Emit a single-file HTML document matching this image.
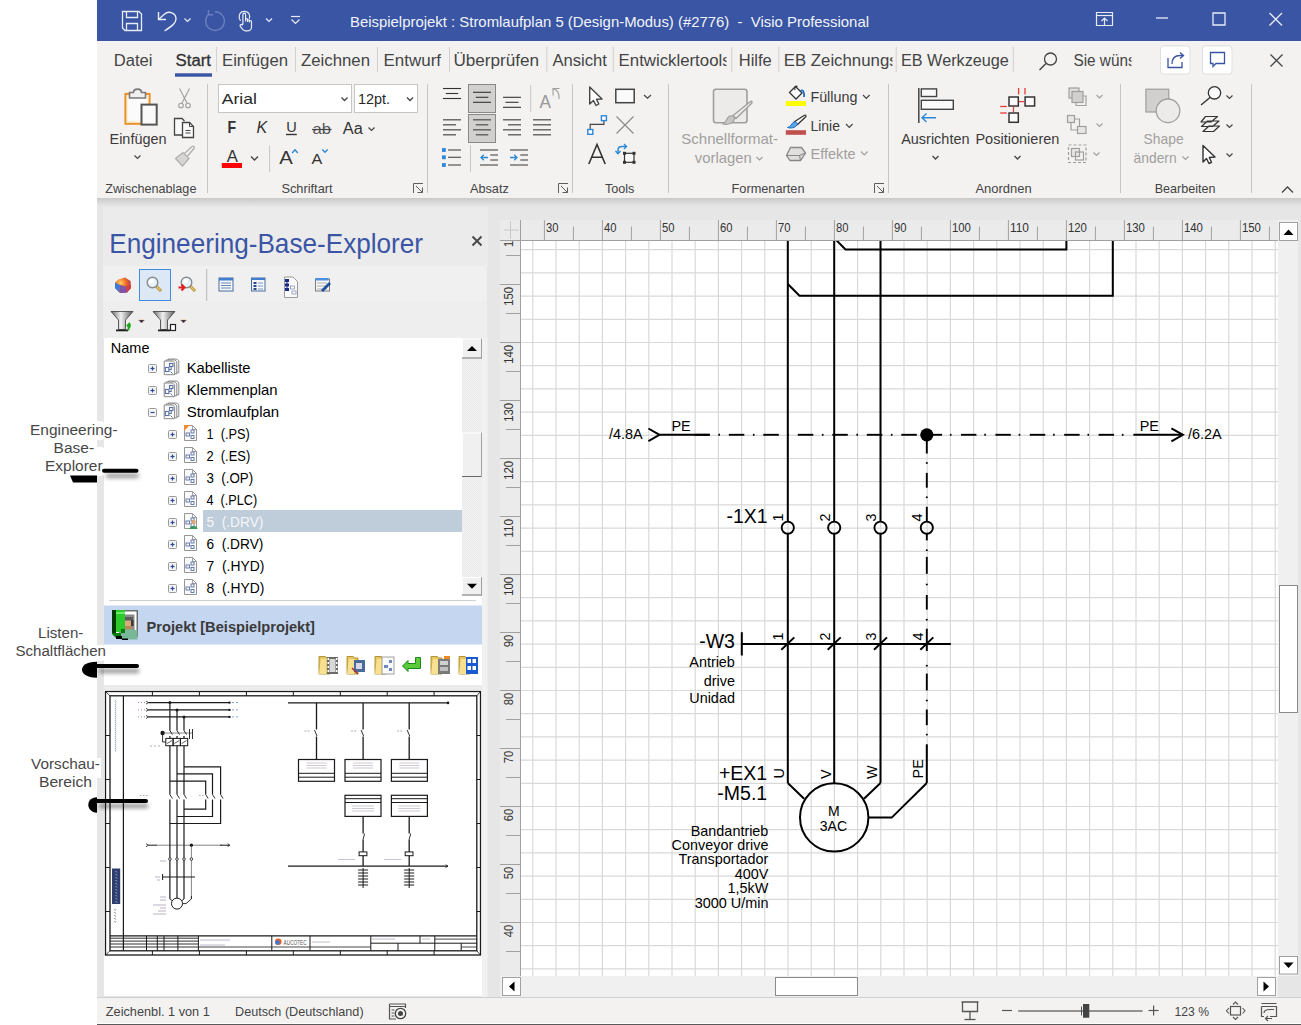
<!DOCTYPE html>
<html><head><meta charset="utf-8"><title>Visio</title>
<style>html,body{margin:0;padding:0;background:#fff;} svg{display:block} text{font-family:"Liberation Sans", sans-serif;}</style>
</head><body>
<svg width="1301" height="1025" viewBox="0 0 1301 1025">
<rect x="0" y="0" width="1301" height="1025" fill="#ffffff" />
<rect x="97" y="0" width="1204" height="41" fill="#3955A3" />
<rect x="97" y="41" width="1204" height="157" fill="#F3F2F1" />
<rect x="97" y="198" width="1204" height="799" fill="#E6E6E6" />
<defs><linearGradient id="sh" x1="0" y1="0" x2="0" y2="1"><stop offset="0" stop-color="#C9C9C9"/><stop offset="1" stop-color="#E6E6E6"/></linearGradient></defs>
<rect x="97" y="198" width="1204" height="8" fill="url(#sh)" />
<rect x="97" y="997" width="1204" height="26" fill="#F3F2F1" />
<line x1="97" y1="997.5" x2="1301" y2="997.5" stroke="#D2D0CE" stroke-width="1" />
<rect x="97" y="1024" width="1204" height="1" fill="#5A5A5A" />
<path d="M122.5 11.5 H139 L141.5 14 V30.5 H125 L122.5 28 Z" stroke="#E8ECF6" stroke-width="1.3" fill="none" />
<path d="M126.5 11.5 V17.5 H137.5 V11.5" stroke="#E8ECF6" stroke-width="1.3" fill="none" />
<path d="M126.5 30.5 V23.5 H137.5 V30.5" stroke="#E8ECF6" stroke-width="1.3" fill="none" />
<path d="M158.5 12 V19.5 H166" stroke="#E8ECF6" stroke-width="1.4" fill="none" />
<path d="M158.8 19.3 L164 14.5 C 169 10 176 13 176 19 C 176 23 172 26 164.5 31" stroke="#E8ECF6" stroke-width="1.4" fill="none" />
<path d="M184.5 18.5 L187.5 21.5 L190.5 18.5" stroke="#E8ECF6" stroke-width="1.2" fill="none" />
<path d="M208.5 14.5 A 9.3 9.3 0 1 0 215 11.8" stroke="#6B80BF" stroke-width="1.4" fill="none" />
<path d="M208.5 10 V14.8 H213.3" stroke="#6B80BF" stroke-width="1.4" fill="none" />
<path d="M240.5 20.8 C 238 17.5 239 11.5 244.2 11.3 C 249 11.2 250.5 15.5 249.3 18.8" stroke="#E8ECF6" stroke-width="1.2" fill="none" />
<path d="M242.9 24.5 V14.5 C 242.9 12.6 245.6 12.6 245.6 14.5 V21 V19.5 C 245.6 18.3 247.5 18.3 247.5 19.5 V21.5 V20.5 C 247.5 19.5 249.3 19.5 249.3 20.5 V22 V21.5 C 249.3 20.3 251.5 20.3 251.5 21.5 V27.5 C 251.5 29.5 249.5 30.8 247.5 30.8 H245.8 C 244.5 30.8 243.5 30.2 242.6 29.3 L240.2 26.2 C 239.6 25.2 240.8 24 242 24.6 L242.9 25.3" stroke="#E8ECF6" stroke-width="1.2" fill="#3955A3" stroke-linejoin="round"/>
<path d="M266 18.5 L269 21.5 L272 18.5" stroke="#E8ECF6" stroke-width="1.2" fill="none" />
<line x1="291" y1="16.5" x2="300" y2="16.5" stroke="#E8ECF6" stroke-width="1.2" />
<path d="M291.5 19.5 L295.5 23.5 L299.5 19.5" stroke="#E8ECF6" stroke-width="1.2" fill="none" />
<text x="350" y="26.5" font-size="15" fill="#F2F4FA" font-weight="normal" text-anchor="start" textLength="519" lengthAdjust="spacingAndGlyphs" xml:space="preserve">Beispielprojekt : Stromlaufplan 5 (Design-Modus) (#2776)  -  Visio Professional</text>
<path d="M1096.5 12.5 H1112.5 V25.5 H1096.5 Z" stroke="#E8ECF6" stroke-width="1.2" fill="none" />
<line x1="1096.5" y1="15.5" x2="1112.5" y2="15.5" stroke="#E8ECF6" stroke-width="1.2" />
<path d="M1101.5 21 L1104.5 18 L1107.5 21 M1104.5 18 V25" stroke="#E8ECF6" stroke-width="1.2" fill="none" />
<line x1="1156" y1="18" x2="1168" y2="18" stroke="#E8ECF6" stroke-width="1.3" />
<path d="M1213 13 H1225 V25 H1213 Z" stroke="#E8ECF6" stroke-width="1.3" fill="none" rx="1"/>
<path d="M1269.5 13 L1282 25.5 M1282 13 L1269.5 25.5" stroke="#E8ECF6" stroke-width="1.3" fill="none" />
<text x="113.8" y="66" font-size="16" fill="#444444" font-weight="normal" text-anchor="start" textLength="38.7" lengthAdjust="spacingAndGlyphs" >Datei</text>
<text x="175.6" y="66" font-size="16" fill="#333333" font-weight="normal" text-anchor="start" textLength="35.4" lengthAdjust="spacingAndGlyphs" stroke="#333333" stroke-width="0.3">Start</text>
<text x="222" y="66" font-size="16" fill="#444444" font-weight="normal" text-anchor="start" textLength="66" lengthAdjust="spacingAndGlyphs" >Einfügen</text>
<text x="301" y="66" font-size="16" fill="#444444" font-weight="normal" text-anchor="start" textLength="69" lengthAdjust="spacingAndGlyphs" >Zeichnen</text>
<text x="383.5" y="66" font-size="16" fill="#444444" font-weight="normal" text-anchor="start" textLength="57.5" lengthAdjust="spacingAndGlyphs" >Entwurf</text>
<text x="453.4" y="66" font-size="16" fill="#444444" font-weight="normal" text-anchor="start" textLength="85.6" lengthAdjust="spacingAndGlyphs" >Überprüfen</text>
<text x="552.4" y="66" font-size="16" fill="#444444" font-weight="normal" text-anchor="start" textLength="54.5" lengthAdjust="spacingAndGlyphs" >Ansicht</text>
<clipPath id="c1"><rect x="610" y="40" width="116.5" height="40"/></clipPath>
<g clip-path="url(#c1)">
<text x="618.6" y="66" font-size="16" fill="#444444" font-weight="normal" text-anchor="start" textLength="112" lengthAdjust="spacingAndGlyphs" >Entwicklertools</text>
</g>
<text x="738.8" y="66" font-size="16" fill="#444444" font-weight="normal" text-anchor="start" textLength="33" lengthAdjust="spacingAndGlyphs" >Hilfe</text>
<clipPath id="c2"><rect x="780" y="40" width="112.5" height="40"/></clipPath>
<g clip-path="url(#c2)">
<text x="783.7" y="66" font-size="16" fill="#444444" font-weight="normal" text-anchor="start" textLength="156" lengthAdjust="spacingAndGlyphs" >EB Zeichnungseditor</text>
</g>
<text x="901" y="66" font-size="16" fill="#444444" font-weight="normal" text-anchor="start" textLength="107.8" lengthAdjust="spacingAndGlyphs" >EB Werkzeuge</text>
<line x1="216.6" y1="47" x2="216.6" y2="72" stroke="#D2D0CE" stroke-width="1" />
<line x1="295.5" y1="47" x2="295.5" y2="72" stroke="#D2D0CE" stroke-width="1" />
<line x1="377.5" y1="47" x2="377.5" y2="72" stroke="#D2D0CE" stroke-width="1" />
<line x1="449.5" y1="47" x2="449.5" y2="72" stroke="#D2D0CE" stroke-width="1" />
<line x1="546.8" y1="47" x2="546.8" y2="72" stroke="#D2D0CE" stroke-width="1" />
<line x1="613.3" y1="47" x2="613.3" y2="72" stroke="#D2D0CE" stroke-width="1" />
<line x1="731.7" y1="47" x2="731.7" y2="72" stroke="#D2D0CE" stroke-width="1" />
<line x1="778.8" y1="47" x2="778.8" y2="72" stroke="#D2D0CE" stroke-width="1" />
<line x1="896.2" y1="47" x2="896.2" y2="72" stroke="#D2D0CE" stroke-width="1" />
<line x1="1013.3" y1="47" x2="1013.3" y2="72" stroke="#D2D0CE" stroke-width="1" />
<rect x="175" y="73.3" width="37" height="3.4" fill="#3955A3" />
<circle cx="1050.5" cy="59" r="6" stroke="#444" stroke-width="1.3" fill="none"/>
<line x1="1046" y1="63.5" x2="1039.5" y2="70" stroke="#444" stroke-width="1.4" />
<clipPath id="c3"><rect x="1070" y="40" width="61.5" height="40"/></clipPath>
<g clip-path="url(#c3)">
<text x="1073.5" y="66" font-size="16" fill="#444444" font-weight="normal" text-anchor="start" textLength="108" lengthAdjust="spacingAndGlyphs" >Sie wünschen...</text>
</g>
<rect x="1160.5" y="46" width="29.5" height="28" fill="#FFFFFF" stroke="#E1DFDD" stroke-width="1" rx="3"/>
<rect x="1202.5" y="46" width="29.5" height="28" fill="#FFFFFF" stroke="#E1DFDD" stroke-width="1" rx="3"/>
<path d="M1168 58 V67.5 H1182 V62" stroke="#3955A3" stroke-width="1.3" fill="none" />
<path d="M1172 64 C 1172 58 1175 55.5 1180 55.5 H1183 M1180 52.5 L1183.5 55.5 L1180 58.5" stroke="#3955A3" stroke-width="1.3" fill="none" />
<path d="M1210.5 52.5 H1224.5 V63.5 H1216 L1213 66.5 V63.5 H1210.5 Z" stroke="#3955A3" stroke-width="1.3" fill="none" />
<path d="M1270.5 54.5 L1282.5 66.5 M1282.5 54.5 L1270.5 66.5" stroke="#444" stroke-width="1.3" fill="none" />
<text x="105.3" y="193" font-size="13" fill="#444444" font-weight="normal" text-anchor="start" textLength="91.1" lengthAdjust="spacingAndGlyphs" >Zwischenablage</text>
<text x="281.4" y="193" font-size="13" fill="#444444" font-weight="normal" text-anchor="start" textLength="51.2" lengthAdjust="spacingAndGlyphs" >Schriftart</text>
<text x="470" y="193" font-size="13" fill="#444444" font-weight="normal" text-anchor="start" textLength="38.8" lengthAdjust="spacingAndGlyphs" >Absatz</text>
<text x="605" y="193" font-size="13" fill="#444444" font-weight="normal" text-anchor="start" textLength="29.4" lengthAdjust="spacingAndGlyphs" >Tools</text>
<text x="731.5" y="193" font-size="13" fill="#444444" font-weight="normal" text-anchor="start" textLength="73.0" lengthAdjust="spacingAndGlyphs" >Formenarten</text>
<text x="975.4" y="193" font-size="13" fill="#444444" font-weight="normal" text-anchor="start" textLength="56.3" lengthAdjust="spacingAndGlyphs" >Anordnen</text>
<text x="1154.7" y="193" font-size="13" fill="#444444" font-weight="normal" text-anchor="start" textLength="60.8" lengthAdjust="spacingAndGlyphs" >Bearbeiten</text>
<line x1="207.5" y1="84" x2="207.5" y2="193" stroke="#C8C6C4" stroke-width="1" />
<line x1="427.5" y1="84" x2="427.5" y2="193" stroke="#C8C6C4" stroke-width="1" />
<line x1="572.5" y1="84" x2="572.5" y2="193" stroke="#C8C6C4" stroke-width="1" />
<line x1="668.5" y1="84" x2="668.5" y2="193" stroke="#C8C6C4" stroke-width="1" />
<line x1="888.5" y1="84" x2="888.5" y2="193" stroke="#C8C6C4" stroke-width="1" />
<line x1="1120.5" y1="84" x2="1120.5" y2="193" stroke="#C8C6C4" stroke-width="1" />
<line x1="1251.5" y1="84" x2="1251.5" y2="193" stroke="#C8C6C4" stroke-width="1" />
<path d="M413.5 193 V183.5 H423" stroke="#605E5C" stroke-width="1" fill="none" />
<path d="M416 186 L422.5 192.5 M422.5 187.5 V192.5 H417.5" stroke="#605E5C" stroke-width="1" fill="none" />
<path d="M558.5 193 V183.5 H568" stroke="#605E5C" stroke-width="1" fill="none" />
<path d="M561 186 L567.5 192.5 M567.5 187.5 V192.5 H562.5" stroke="#605E5C" stroke-width="1" fill="none" />
<path d="M874.5 193 V183.5 H884" stroke="#605E5C" stroke-width="1" fill="none" />
<path d="M877 186 L883.5 192.5 M883.5 187.5 V192.5 H878.5" stroke="#605E5C" stroke-width="1" fill="none" />
<path d="M1282 192.5 L1287.5 187 L1293 192.5" stroke="#444" stroke-width="1.3" fill="none" />
<rect x="125.4" y="93.9" width="24.2" height="29.9" fill="#FFF3D6" stroke="#E8912D" stroke-width="2"/>
<rect x="128" y="96.5" width="19" height="24.5" fill="#FBFBFB" />
<path d="M129.5 98 V92.5 H133.5 C 133.5 88 141.5 88 141.5 92.5 H145.5 V98 Z" stroke="#7A7A7A" stroke-width="1.6" fill="#F0F0F0" />
<rect x="141.5" y="104.6" width="15.2" height="20" fill="#FAFAFA" stroke="#555555" stroke-width="2"/>
<text x="109.5" y="143.5" font-size="15" fill="#3B3A39" font-weight="normal" text-anchor="start" textLength="57.1" lengthAdjust="spacingAndGlyphs" >Einfügen</text>
<path d="M134.5 155.5 L137.5 158.5 L140.5 155.5" stroke="#444444" stroke-width="1.2" fill="none" />
<path d="M179.5 88.5 L187 103 M189.5 88.5 L182 103" stroke="#A19F9D" stroke-width="1.1" fill="none" />
<circle cx="181" cy="105.5" r="2.3" stroke="#A19F9D" stroke-width="1.1" fill="none"/>
<circle cx="188" cy="105.5" r="2.3" stroke="#A19F9D" stroke-width="1.1" fill="none"/>
<path d="M182 135 H174.5 V118.5 H182 L184.5 121" stroke="#444444" stroke-width="1.3" fill="#FAFAFA" />
<path d="M182.5 122.5 H189.5 L193.5 126.5 V137.5 H182.5 Z" stroke="#444444" stroke-width="1.3" fill="#FAFAFA" />
<path d="M189.5 122.5 V126.5 H193.5" stroke="#444444" stroke-width="1" fill="none" />
<line x1="185.5" y1="130.5" x2="190.5" y2="130.5" stroke="#444444" stroke-width="1" />
<line x1="185.5" y1="133" x2="190.5" y2="133" stroke="#444444" stroke-width="1" />
<path d="M175.5 158.5 L183 152.5 L189 158.5 L182.5 166 Z" stroke="#B0AEAC" stroke-width="1.2" fill="#D8D6D4" />
<path d="M184.5 153.5 L192 146.5 C 194 145.5 195 147 194 148.5 L187.5 156" stroke="#B0AEAC" stroke-width="1.3" fill="none" />
<rect x="218.5" y="84.5" width="133" height="28" fill="#FFFFFF" stroke="#C8C6C4" stroke-width="1"/>
<rect x="354.5" y="84.5" width="63" height="28" fill="#FFFFFF" stroke="#C8C6C4" stroke-width="1"/>
<text x="221.8" y="104.2" font-size="15" fill="#262626" font-weight="normal" text-anchor="start" textLength="35" lengthAdjust="spacingAndGlyphs" >Arial</text>
<text x="358" y="104.2" font-size="15" fill="#262626" font-weight="normal" text-anchor="start" textLength="32" lengthAdjust="spacingAndGlyphs" >12pt.</text>
<path d="M341.5 97.5 L344.5 100.5 L347.5 97.5" stroke="#444444" stroke-width="1.3" fill="none" />
<path d="M407 97.5 L410 100.5 L413 97.5" stroke="#444444" stroke-width="1.3" fill="none" />
<text x="227.4" y="132.9" font-size="16.5" fill="#333333" font-weight="bold" text-anchor="start" textLength="8.6" lengthAdjust="spacingAndGlyphs" >F</text>
<text x="256.6" y="132.9" font-size="16" fill="#333333" font-weight="normal" text-anchor="start" textLength="10.7" lengthAdjust="spacingAndGlyphs" font-style="italic">K</text>
<text x="286.2" y="131.6" font-size="15" fill="#333333" font-weight="normal" text-anchor="start" textLength="10.5" lengthAdjust="spacingAndGlyphs" >U</text>
<line x1="286" y1="134.5" x2="296.8" y2="134.5" stroke="#333333" stroke-width="1.4" />
<text x="312.5" y="134.2" font-size="15" fill="#555555" font-weight="normal" text-anchor="start" textLength="18.5" lengthAdjust="spacingAndGlyphs" >ab</text>
<line x1="312" y1="129.5" x2="331.5" y2="129.5" stroke="#444444" stroke-width="1.2" />
<text x="342.8" y="134.2" font-size="16" fill="#333333" font-weight="normal" text-anchor="start" textLength="20" lengthAdjust="spacingAndGlyphs" >Aa</text>
<path d="M368.5 127.5 L371.5 130.5 L374.5 127.5" stroke="#444444" stroke-width="1.2" fill="none" />
<text x="226.8" y="161.7" font-size="16.5" fill="#333333" font-weight="normal" text-anchor="start" textLength="11.2" lengthAdjust="spacingAndGlyphs" >A</text>
<rect x="221.8" y="163" width="20.2" height="5" fill="#FF0000" />
<path d="M251 156.5 L254.5 160 L258 156.5" stroke="#444444" stroke-width="1.3" fill="none" />
<line x1="269.6" y1="145.5" x2="269.6" y2="172" stroke="#C8C6C4" stroke-width="1" />
<text x="279.3" y="164.3" font-size="19" fill="#333333" font-weight="normal" text-anchor="start" textLength="13.5" lengthAdjust="spacingAndGlyphs" >A</text>
<path d="M292.2 153 L295 149.8 L297.8 153" stroke="#2B88D8" stroke-width="1.4" fill="none" />
<text x="311.4" y="164.3" font-size="15" fill="#333333" font-weight="normal" text-anchor="start" textLength="10.8" lengthAdjust="spacingAndGlyphs" >A</text>
<path d="M322.3 149.5 L325 152.3 L327.7 149.5" stroke="#2B88D8" stroke-width="1.4" fill="none" />
<rect x="468.5" y="84.5" width="27" height="28" fill="#D2D0CE" stroke="#8A8886" stroke-width="1"/>
<rect x="468.5" y="114.5" width="27" height="28" fill="#D2D0CE" stroke="#8A8886" stroke-width="1"/>
<line x1="443" y1="88.5" x2="461" y2="88.5" stroke="#333" stroke-width="1.1" />
<line x1="445.8" y1="93.5" x2="458.2" y2="93.5" stroke="#333" stroke-width="1.1" />
<line x1="443" y1="98.5" x2="461" y2="98.5" stroke="#333" stroke-width="1.1" />
<line x1="473" y1="92.3" x2="491" y2="92.3" stroke="#333" stroke-width="1.1" />
<line x1="475.8" y1="97.3" x2="488.3" y2="97.3" stroke="#333" stroke-width="1.1" />
<line x1="473" y1="102.3" x2="491" y2="102.3" stroke="#333" stroke-width="1.1" />
<line x1="503" y1="97.3" x2="521" y2="97.3" stroke="#333" stroke-width="1.1" />
<line x1="505.5" y1="102.3" x2="518.5" y2="102.3" stroke="#333" stroke-width="1.1" />
<line x1="503" y1="107.3" x2="521" y2="107.3" stroke="#333" stroke-width="1.1" />
<line x1="530.7" y1="85" x2="530.7" y2="112" stroke="#C8C6C4" stroke-width="1" />
<text x="539.5" y="108" font-size="18" fill="#9A9896" font-weight="normal" text-anchor="start" textLength="11.5" lengthAdjust="spacingAndGlyphs" >A</text>
<path d="M553 95.5 V88.5 H559.5 M553.3 88.8 C 558 90 559.5 93 559 99" stroke="#A19F9D" stroke-width="1.1" fill="none" />
<line x1="443" y1="119.8" x2="461" y2="119.8" stroke="#555" stroke-width="1.3" />
<line x1="443" y1="124.8" x2="456" y2="124.8" stroke="#555" stroke-width="1.3" />
<line x1="443" y1="129.8" x2="461" y2="129.8" stroke="#555" stroke-width="1.3" />
<line x1="443" y1="134.8" x2="456" y2="134.8" stroke="#555" stroke-width="1.3" />
<line x1="473" y1="119.8" x2="491" y2="119.8" stroke="#555" stroke-width="1.3" />
<line x1="475.8" y1="124.8" x2="488.3" y2="124.8" stroke="#555" stroke-width="1.3" />
<line x1="473" y1="129.8" x2="491" y2="129.8" stroke="#555" stroke-width="1.3" />
<line x1="475.8" y1="134.8" x2="488.3" y2="134.8" stroke="#555" stroke-width="1.3" />
<line x1="503" y1="119.8" x2="521" y2="119.8" stroke="#555" stroke-width="1.3" />
<line x1="508" y1="124.8" x2="521" y2="124.8" stroke="#555" stroke-width="1.3" />
<line x1="503" y1="129.8" x2="521" y2="129.8" stroke="#555" stroke-width="1.3" />
<line x1="508" y1="134.8" x2="521" y2="134.8" stroke="#555" stroke-width="1.3" />
<line x1="533" y1="119.8" x2="551" y2="119.8" stroke="#555" stroke-width="1.3" />
<line x1="533" y1="124.8" x2="551" y2="124.8" stroke="#555" stroke-width="1.3" />
<line x1="533" y1="129.8" x2="551" y2="129.8" stroke="#555" stroke-width="1.3" />
<line x1="533" y1="134.8" x2="551" y2="134.8" stroke="#555" stroke-width="1.3" />
<rect x="442" y="148.1" width="3.8" height="3.8" fill="#2B88D8" />
<line x1="448" y1="150" x2="461" y2="150" stroke="#555" stroke-width="1.2" />
<rect x="442" y="155.4" width="3.8" height="3.8" fill="#2B88D8" />
<line x1="448" y1="157.3" x2="461" y2="157.3" stroke="#555" stroke-width="1.2" />
<rect x="442" y="163.1" width="3.8" height="3.8" fill="#2B88D8" />
<line x1="448" y1="165" x2="461" y2="165" stroke="#555" stroke-width="1.2" />
<line x1="470.5" y1="145" x2="470.5" y2="172" stroke="#C8C6C4" stroke-width="1" />
<line x1="480" y1="150" x2="498" y2="150" stroke="#555" stroke-width="1.2" />
<line x1="480" y1="165" x2="498" y2="165" stroke="#555" stroke-width="1.2" />
<line x1="490.3" y1="155" x2="498" y2="155" stroke="#555" stroke-width="1.2" />
<line x1="490.3" y1="160" x2="498" y2="160" stroke="#555" stroke-width="1.2" />
<path d="M481 157.5 H488 M483.8 154.7 L481 157.5 L483.8 160.3" stroke="#2B88D8" stroke-width="1.3" fill="none" />
<line x1="510" y1="150" x2="528" y2="150" stroke="#555" stroke-width="1.2" />
<line x1="510" y1="165" x2="528" y2="165" stroke="#555" stroke-width="1.2" />
<line x1="520.3" y1="155" x2="528" y2="155" stroke="#555" stroke-width="1.2" />
<line x1="520.3" y1="160" x2="528" y2="160" stroke="#555" stroke-width="1.2" />
<path d="M510 157.5 H517 M514.2 154.7 L517 157.5 L514.2 160.3" stroke="#2B88D8" stroke-width="1.3" fill="none" />
<path d="M589.7 87 V104 L593.5 100.5 L596 105.5 L598.8 104 L596.5 99.3 L602 99 Z" stroke="#444" stroke-width="1.4" fill="#FFFFFF" stroke-linejoin="round"/>
<rect x="615.8" y="89.3" width="18.4" height="13.4" fill="#FAFAFA" stroke="#444" stroke-width="1.5"/>
<path d="M644 95 L647.5 98.3 L651 95" stroke="#444444" stroke-width="1.2" fill="none" />
<path d="M590.2 129 V124.4 H603.9 V120.8" stroke="#444" stroke-width="1.2" fill="none" />
<rect x="587.8" y="129.5" width="5" height="4.8" fill="#FFFFFF" stroke="#2B88D8" stroke-width="1.4"/>
<rect x="601.4" y="115.8" width="5" height="4.8" fill="#FFFFFF" stroke="#2B88D8" stroke-width="1.4"/>
<path d="M616.5 116.5 L633.5 133.5 M633.5 116.5 L616.5 133.5" stroke="#8A8886" stroke-width="1.1" fill="none" />
<path d="M588.8 164 L597 144.5 L605.2 164 M591.5 157.2 H602.5" stroke="#333" stroke-width="1.6" fill="none" />
<rect x="624.5" y="153.3" width="9.5" height="9" fill="#F8F8F8" stroke="#333" stroke-width="1.2"/>
<rect x="623.0" y="151.8" width="3" height="3" fill="#333" />
<rect x="632.5" y="151.8" width="3" height="3" fill="#333" />
<rect x="623.0" y="160.8" width="3" height="3" fill="#333" />
<rect x="632.5" y="160.8" width="3" height="3" fill="#333" />
<path d="M618 153.5 V150 C 618 147.5 619.5 146.5 622 146.5 H626" stroke="#2B88D8" stroke-width="1.5" fill="none" />
<path d="M615.5 151 L618 153.8 L620.5 151 M624 144 L626.5 146.5 L624 149" stroke="#2B88D8" stroke-width="1.4" fill="none" />
<rect x="713.5" y="89.2" width="33.5" height="33.5" fill="#EDEBE9" stroke="#A19F9D" stroke-width="1.6" rx="2.5"/>
<path d="M750.5 101.5 C 752 100.5 752.5 102 751.5 103.5 L736 118.5 L733 115.5 Z" stroke="#A19F9D" stroke-width="1.4" fill="#EDEBE9" stroke-linejoin="round"/>
<path d="M722.5 124 C 725.5 123.5 726 119.5 728.5 117 C 731 114.5 735 116 734.5 119 C 734 122.5 729.5 125.5 722.5 124 Z" stroke="#A19F9D" stroke-width="1.1" fill="#C8C6C4" />
<text x="681.3" y="144" font-size="15" fill="#A19F9D" font-weight="normal" text-anchor="start" textLength="96.7" lengthAdjust="spacingAndGlyphs" >Schnellformat-</text>
<text x="694.8" y="163" font-size="15" fill="#A19F9D" font-weight="normal" text-anchor="start" textLength="57" lengthAdjust="spacingAndGlyphs" >vorlagen</text>
<path d="M756.5 157 L759.5 160 L762.5 157" stroke="#A19F9D" stroke-width="1.2" fill="none" />
<path d="M789.5 92.5 L795.5 86.5 L802 93 L796 99 Z" stroke="#333" stroke-width="1.3" fill="#FFFFFF" />
<path d="M795 90 C 794 87 796 85.5 797.5 86.5" stroke="#333" stroke-width="1.2" fill="none" />
<path d="M800.5 91 C 803 89 804.5 92 804 97" stroke="#1E6FC5" stroke-width="1.8" fill="none" />
<rect x="785.8" y="101" width="20.2" height="5" fill="#FFFF00" />
<text x="810.4" y="102" font-size="15" fill="#3B3A39" font-weight="normal" text-anchor="start" textLength="47" lengthAdjust="spacingAndGlyphs" >Füllung</text>
<path d="M863 95 L866.3 98.3 L869.6 95" stroke="#444444" stroke-width="1.2" fill="none" />
<path d="M794 122 L804 115.5 C 806 114.5 806.5 116 805.5 117 L797 125" stroke="#333" stroke-width="1.3" fill="#FFFFFF" />
<path d="M787.5 127.5 C 791 127 791.5 123 794 122 C 797 121.5 798 123.5 797 125 C 795 128 791 128.5 787.5 127.5 Z" stroke="#1E6FC5" stroke-width="1" fill="#5BA3E0" />
<rect x="785.8" y="130.2" width="20.2" height="4.6" fill="#C0504D" />
<text x="810.4" y="131" font-size="15" fill="#3B3A39" font-weight="normal" text-anchor="start" textLength="29.6" lengthAdjust="spacingAndGlyphs" >Linie</text>
<path d="M846 124 L849.3 127.3 L852.6 124" stroke="#444444" stroke-width="1.2" fill="none" />
<path d="M790.5 147.5 H801.5 L805.5 153 L800.5 160.5 H790 L786.5 155.5 Z" stroke="#8A8886" stroke-width="1.3" fill="#E1DFDD" />
<path d="M786.5 155.5 H799.5 L805.5 153 M799.5 155.5 L800.5 160.5" stroke="#8A8886" stroke-width="1.1" fill="none" />
<text x="810.4" y="159.3" font-size="15" fill="#A19F9D" font-weight="normal" text-anchor="start" textLength="45.2" lengthAdjust="spacingAndGlyphs" >Effekte</text>
<path d="M861 151.5 L864.3 154.8 L867.6 151.5" stroke="#A19F9D" stroke-width="1.2" fill="none" />
<line x1="918.8" y1="88" x2="918.8" y2="123" stroke="#444" stroke-width="1.5" />
<rect x="921.3" y="88.9" width="15.3" height="7.6" fill="#FAFAFA" stroke="#444" stroke-width="1.4"/>
<rect x="921.3" y="100.3" width="32" height="9" fill="#FAFAFA" stroke="#444" stroke-width="1.4"/>
<path d="M936 117.7 H922 M926.5 113.5 L922 117.7 L926.5 122" stroke="#2B88D8" stroke-width="1.4" fill="none" />
<text x="901.2" y="143.5" font-size="15" fill="#3B3A39" font-weight="normal" text-anchor="start" textLength="68.3" lengthAdjust="spacingAndGlyphs" >Ausrichten</text>
<path d="M932.5 156 L935.5 159 L938.5 156" stroke="#444444" stroke-width="1.3" fill="none" />
<rect x="1009" y="97" width="9.3" height="9" fill="#FAFAFA" stroke="#333" stroke-width="1.5"/>
<rect x="1025.1" y="97" width="9.5" height="9" fill="#FAFAFA" stroke="#333" stroke-width="1.5"/>
<rect x="1009" y="113" width="9.3" height="9.3" fill="#FAFAFA" stroke="#333" stroke-width="1.5"/>
<line x1="1018.8" y1="101.6" x2="1024.4" y2="101.6" stroke="#E83A3A" stroke-width="1.2" />
<line x1="1018.6" y1="88" x2="1018.6" y2="94.5" stroke="#E83A3A" stroke-width="1.3" />
<line x1="1025" y1="88" x2="1025" y2="94.5" stroke="#E83A3A" stroke-width="1.3" />
<line x1="1000.2" y1="106.5" x2="1006.8" y2="106.5" stroke="#E83A3A" stroke-width="1.3" />
<line x1="1000.2" y1="113" x2="1006.8" y2="113" stroke="#E83A3A" stroke-width="1.3" />
<line x1="1013.5" y1="106.5" x2="1013.5" y2="112.3" stroke="#E83A3A" stroke-width="1.2" />
<text x="975.4" y="143.5" font-size="15" fill="#3B3A39" font-weight="normal" text-anchor="start" textLength="84" lengthAdjust="spacingAndGlyphs" >Positionieren</text>
<path d="M1014.5 156 L1017.5 159 L1020.5 156" stroke="#444444" stroke-width="1.3" fill="none" />
<rect x="1069" y="88" width="10" height="10" fill="#E1DFDD" stroke="#A19F9D" stroke-width="1.2"/>
<rect x="1072" y="91.5" width="11" height="11" fill="#D2D0CE" stroke="#A19F9D" stroke-width="1.2"/>
<path d="M1083 96 H1086 V105.5 H1076 V102.5" stroke="#A19F9D" stroke-width="1.2" fill="none" />
<path d="M1096.5 95 L1099.5 98 L1102.5 95" stroke="#A19F9D" stroke-width="1.1" fill="none" />
<rect x="1067.5" y="115.5" width="7" height="7" fill="#E8E6E4" stroke="#A19F9D" stroke-width="1.2"/>
<rect x="1077.5" y="126.5" width="8.5" height="7" fill="#E8E6E4" stroke="#A19F9D" stroke-width="1.2"/>
<path d="M1074.5 119 H1079.5 V126.5 M1071 122.5 V130 H1077.5" stroke="#A19F9D" stroke-width="1.2" fill="none" />
<path d="M1096.5 123.5 L1099.5 126.5 L1102.5 123.5" stroke="#A19F9D" stroke-width="1.1" fill="none" />
<rect x="1068.5" y="145" width="17.5" height="17.5" fill="none" stroke="#A19F9D" stroke-width="1.2" stroke-dasharray="3 2"/>
<rect x="1071.5" y="148.5" width="8" height="8" fill="#E8E6E4" stroke="#A19F9D" stroke-width="1.2"/>
<rect x="1075.5" y="152" width="8" height="8" fill="none" stroke="#A19F9D" stroke-width="1.2"/>
<path d="M1093.5 152.5 L1096.5 155.5 L1099.5 152.5" stroke="#A19F9D" stroke-width="1.1" fill="none" />
<rect x="1145.9" y="89.2" width="22.8" height="22.8" fill="#D2D0CE" stroke="#A19F9D" stroke-width="1.2"/>
<circle cx="1168" cy="110.8" r="11.8" fill="#EDEBE9" stroke="#A19F9D" stroke-width="1.3"/>
<text x="1143.6" y="143.7" font-size="15" fill="#A19F9D" font-weight="normal" text-anchor="start" textLength="40" lengthAdjust="spacingAndGlyphs" >Shape</text>
<text x="1133.6" y="163" font-size="15" fill="#A19F9D" font-weight="normal" text-anchor="start" textLength="43" lengthAdjust="spacingAndGlyphs" >ändern</text>
<path d="M1182.5 156.5 L1185.5 159.5 L1188.5 156.5" stroke="#A19F9D" stroke-width="1.2" fill="none" />
<circle cx="1214.5" cy="92.8" r="6.2" fill="#FAFAFA" stroke="#333" stroke-width="1.3"/>
<line x1="1210" y1="97.5" x2="1201" y2="105" stroke="#333" stroke-width="1.4" />
<path d="M1226.5 95.5 L1229.5 98.5 L1232.5 95.5" stroke="#444444" stroke-width="1.2" fill="none" />
<path d="M1205.5 116.5 H1217.5 L1211 122 H1201 Z M1207.5 121 H1219 L1212.5 126.5 H1201.5 Z M1209 126 H1219.5 L1213.5 131.5 H1203 Z" stroke="#333" stroke-width="1.2" fill="#F3F2F1" stroke-linejoin="round"/>
<path d="M1203 145.5 V162 L1206.5 158.5 L1209 163.5 L1211.5 162.3 L1209.3 157.5 L1215 157 Z" stroke="#333" stroke-width="1.4" fill="#FFFFFF" stroke-linejoin="round"/>
<path d="M1226.5 153.5 L1229.5 156.5 L1232.5 153.5" stroke="#444444" stroke-width="1.2" fill="none" />
<path d="M1226.5 124.5 L1229.5 127.5 L1232.5 124.5" stroke="#444444" stroke-width="1.2" fill="none" />
<rect x="103" y="207" width="385" height="59" fill="#EBEBEB" />
<rect x="103" y="265.5" width="384" height="37" fill="#F0F0F0" />
<rect x="103" y="302.5" width="384" height="36" fill="#EEEEEE" />
<text x="109.3" y="253.4" font-size="28" fill="#3A55A6" font-weight="normal" text-anchor="start" textLength="313.7" lengthAdjust="spacingAndGlyphs" >Engineering-Base-Explorer</text>
<path d="M472.5 236.5 L481.5 245.5 M481.5 236.5 L472.5 245.5" stroke="#4A4A4A" stroke-width="2" fill="none" />
<defs><radialGradient id="ball" cx="0.35" cy="0.35" r="0.7"><stop offset="0" stop-color="#FFD35A"/><stop offset="0.5" stop-color="#F06A2A"/><stop offset="1" stop-color="#B03050"/></radialGradient></defs>
<path d="M118.5 279.5 L125 277.5 L130.5 281 L131 288 L127 292.5 L120 293 L115 288 L115.5 282 Z" stroke="none" stroke-width="1" fill="url(#ball)" />
<path d="M115 282.5 L120 285 L119.5 292.5 L115 288 Z" stroke="none" stroke-width="1" fill="#3E7BD6" />
<path d="M120 285 L126 286.5 L127 292.5 L120 293 Z" stroke="none" stroke-width="1" fill="#8055A8" />
<path d="M126 286.5 L131 285 L131 288 L127 292.5 Z" stroke="none" stroke-width="1" fill="#D04040" />
<rect x="139.5" y="269.5" width="31" height="31" fill="#DCE8F5" stroke="#3C8CE0" stroke-width="1"/>
<path d="M156.3 286.3 L161.0 291.0" stroke="#B08A30" stroke-width="3" fill="none" />
<path d="M156.8 286.8 L160.5 290.5" stroke="#E8C860" stroke-width="1.5" fill="none" />
<circle cx="152.5" cy="282.5" r="5.3" fill="#E8F2FA" stroke="#8A8A8A" stroke-width="1.4"/>
<circle cx="151.3" cy="281.3" r="2.5" fill="#FFFFFF" opacity="0.8"/>
<path d="M190.3 286.3 L195.0 291.0" stroke="#B08A30" stroke-width="3" fill="none" />
<path d="M190.8 286.8 L194.5 290.5" stroke="#E8C860" stroke-width="1.5" fill="none" />
<circle cx="186.5" cy="282.5" r="5.3" fill="#E8F2FA" stroke="#8A8A8A" stroke-width="1.4"/>
<circle cx="185.3" cy="281.3" r="2.5" fill="#FFFFFF" opacity="0.8"/>
<path d="M178.5 287.5 H184 M181.5 284.5 L184.5 287.5 L181.5 290.5" stroke="#E02020" stroke-width="2" fill="none" />
<line x1="206.7" y1="269" x2="206.7" y2="301" stroke="#B8B8B8" stroke-width="1" />
<rect x="219" y="278" width="14" height="13" fill="#F4F8FC" stroke="#4A6A9A" stroke-width="1"/>
<rect x="219" y="278" width="14" height="2.5" fill="#3F7FD0" />
<line x1="221" y1="283" x2="231" y2="283" stroke="#5A7AAA" stroke-width="0.9" />
<line x1="221" y1="285.5" x2="231" y2="285.5" stroke="#5A7AAA" stroke-width="0.9" />
<line x1="221" y1="288" x2="231" y2="288" stroke="#5A7AAA" stroke-width="0.9" />
<rect x="251.5" y="278" width="13.5" height="13" fill="#F4F8FC" stroke="#4A6A9A" stroke-width="1"/>
<rect x="251.5" y="278" width="13.5" height="2" fill="#3F7FD0" />
<rect x="253.5" y="282" width="3" height="2" fill="#2A4A8A" />
<line x1="258" y1="283" x2="263" y2="283" stroke="#6A8ABA" stroke-width="0.9" />
<rect x="253.5" y="285" width="3" height="2" fill="#2A4A8A" />
<line x1="258" y1="286" x2="263" y2="286" stroke="#6A8ABA" stroke-width="0.9" />
<rect x="253.5" y="288" width="3" height="2" fill="#2A4A8A" />
<line x1="258" y1="289" x2="263" y2="289" stroke="#6A8ABA" stroke-width="0.9" />
<path d="M284.5 277 H293 L297.5 281.5 V297.5 H284.5 Z" stroke="#9A9A9A" stroke-width="1" fill="#FAFAFA" />
<rect x="285" y="279" width="4" height="3" fill="#1A2A8A" />
<rect x="285" y="283.5" width="4" height="3" fill="#1A2A8A" />
<rect x="285" y="288" width="4" height="3" fill="#1A2A8A" />
<line x1="287" y1="282" x2="287" y2="291" stroke="#1A2A8A" stroke-width="1" />
<rect x="290.5" y="286" width="4" height="3" fill="none" stroke="#8A9ABA" stroke-width="0.8"/>
<rect x="292" y="291" width="4" height="3" fill="none" stroke="#8A9ABA" stroke-width="0.8"/>
<rect x="315.5" y="279" width="14" height="12" fill="#F8F8F8" stroke="#7A7A7A" stroke-width="1"/>
<rect x="315.5" y="278" width="13" height="2.5" fill="#4F8FE0" />
<line x1="317" y1="283" x2="327" y2="283" stroke="#9A9A9A" stroke-width="0.8" />
<line x1="317" y1="286" x2="327" y2="286" stroke="#9A9A9A" stroke-width="0.8" />
<line x1="317" y1="289" x2="327" y2="289" stroke="#9A9A9A" stroke-width="0.8" />
<path d="M321 290 L329 282 L331 284 L323 292 Z" stroke="none" stroke-width="1" fill="#2050A0" />
<defs><linearGradient id="fg" x1="0" x2="1"><stop offset="0" stop-color="#6A6A6A"/><stop offset="0.45" stop-color="#F0F0F0"/><stop offset="1" stop-color="#5A5A5A"/></linearGradient></defs>
<path d="M111 311.5 H133 L125.5 320 V329.5 H118.5 V320 Z" stroke="#3A3A3A" stroke-width="0.8" fill="url(#fg)" />
<rect x="116" y="329.5" width="12" height="1.8" fill="#222" />
<path d="M131 325.5 H128 M130 323 L127.5 325.5 L130 328 M128.5 325.5 V330.5" stroke="#1AAA1A" stroke-width="1.8" fill="none" />
<path d="M138.5 320 H144.5 L141.5 323 Z" stroke="#E8A040" stroke-width="0.5" fill="#0A1A5A" />
<defs><linearGradient id="fg" x1="0" x2="1"><stop offset="0" stop-color="#6A6A6A"/><stop offset="0.45" stop-color="#F0F0F0"/><stop offset="1" stop-color="#5A5A5A"/></linearGradient></defs>
<path d="M153 311.5 H175 L167.5 320 V329.5 H160.5 V320 Z" stroke="#3A3A3A" stroke-width="0.8" fill="url(#fg)" />
<rect x="158" y="329.5" width="12" height="1.8" fill="#222" />
<rect x="170.5" y="324.5" width="5" height="6" fill="#FFFFFF" stroke="#222" stroke-width="1.2"/>
<path d="M180.5 320 H186.5 L183.5 323 Z" stroke="#E8A040" stroke-width="0.5" fill="#0A1A5A" />
<rect x="482" y="338" width="5.5" height="659" fill="#F1F1F1" />
<rect x="104" y="338" width="378" height="347" fill="#FFFFFF" />
<text x="110.8" y="353" font-size="14.5" fill="#000000" font-weight="normal" text-anchor="start" textLength="38.7" lengthAdjust="spacingAndGlyphs" >Name</text>
<rect x="148.5" y="364.5" width="8" height="8" rx="1" fill="#F4F4F4" stroke="#9A9A9A" stroke-width="1"/>
<line x1="150.5" y1="368.5" x2="154.5" y2="368.5" stroke="#2A4A9A" stroke-width="1.2" />
<line x1="152.5" y1="366.5" x2="152.5" y2="370.5" stroke="#2A4A9A" stroke-width="1.2" />
<path d="M168.3 372.7 V359 H176.8 L178.8 361 V372.7 Z" stroke="#8A8A8A" stroke-width="1" fill="#FAFAFA" />
<path d="M166.2 373.8 V359.9 H174.8 L176.8 361.9 V373.8 Z" stroke="#8A8A8A" stroke-width="1" fill="#FAFAFA" />
<path d="M164.2 374.7 V361 H172.6 L174.6 363 V374.7 Z" stroke="#8A8A8A" stroke-width="1" fill="#FAFAFA" />
<rect x="165.3" y="367.5" width="3.6" height="4" fill="none" stroke="#5A70A8" stroke-width="1.1"/>
<rect x="169.5" y="363.5" width="3.4" height="3" fill="none" stroke="#5A70A8" stroke-width="1.1"/>
<path d="M171.2 366.5 V370 M168.9 369.5 H171.2 M170.5 371.5 L172.5 373.5" stroke="#5A70A8" stroke-width="1" fill="none" />
<text x="186.7" y="372.7" font-size="14.5" fill="#000000" font-weight="normal" text-anchor="start" textLength="63.8" lengthAdjust="spacingAndGlyphs" xml:space="preserve">Kabelliste</text>
<rect x="148.5" y="386.5" width="8" height="8" rx="1" fill="#F4F4F4" stroke="#9A9A9A" stroke-width="1"/>
<line x1="150.5" y1="390.5" x2="154.5" y2="390.5" stroke="#2A4A9A" stroke-width="1.2" />
<line x1="152.5" y1="388.5" x2="152.5" y2="392.5" stroke="#2A4A9A" stroke-width="1.2" />
<path d="M168.3 394.7 V381 H176.8 L178.8 383 V394.7 Z" stroke="#8A8A8A" stroke-width="1" fill="#FAFAFA" />
<path d="M166.2 395.8 V381.9 H174.8 L176.8 383.9 V395.8 Z" stroke="#8A8A8A" stroke-width="1" fill="#FAFAFA" />
<path d="M164.2 396.7 V383 H172.6 L174.6 385 V396.7 Z" stroke="#8A8A8A" stroke-width="1" fill="#FAFAFA" />
<rect x="165.3" y="389.5" width="3.6" height="4" fill="none" stroke="#5A70A8" stroke-width="1.1"/>
<rect x="169.5" y="385.5" width="3.4" height="3" fill="none" stroke="#5A70A8" stroke-width="1.1"/>
<path d="M171.2 388.5 V392 M168.9 391.5 H171.2 M170.5 393.5 L172.5 395.5" stroke="#5A70A8" stroke-width="1" fill="none" />
<text x="186.7" y="394.7" font-size="14.5" fill="#000000" font-weight="normal" text-anchor="start" textLength="90.8" lengthAdjust="spacingAndGlyphs" xml:space="preserve">Klemmenplan</text>
<rect x="148.5" y="408.5" width="8" height="8" rx="1" fill="#F4F4F4" stroke="#9A9A9A" stroke-width="1"/>
<line x1="150.5" y1="412.5" x2="154.5" y2="412.5" stroke="#2A4A9A" stroke-width="1.2" />
<path d="M168.3 416.7 V403 H176.8 L178.8 405 V416.7 Z" stroke="#8A8A8A" stroke-width="1" fill="#FAFAFA" />
<path d="M166.2 417.8 V403.9 H174.8 L176.8 405.9 V417.8 Z" stroke="#8A8A8A" stroke-width="1" fill="#FAFAFA" />
<path d="M164.2 418.7 V405 H172.6 L174.6 407 V418.7 Z" stroke="#8A8A8A" stroke-width="1" fill="#FAFAFA" />
<rect x="165.3" y="411.5" width="3.6" height="4" fill="none" stroke="#5A70A8" stroke-width="1.1"/>
<rect x="169.5" y="407.5" width="3.4" height="3" fill="none" stroke="#5A70A8" stroke-width="1.1"/>
<path d="M171.2 410.5 V414 M168.9 413.5 H171.2 M170.5 415.5 L172.5 417.5" stroke="#5A70A8" stroke-width="1" fill="none" />
<text x="186.7" y="416.7" font-size="14.5" fill="#000000" font-weight="normal" text-anchor="start" textLength="92.5" lengthAdjust="spacingAndGlyphs" xml:space="preserve">Stromlaufplan</text>
<rect x="168.5" y="430.5" width="8" height="8" rx="1" fill="#F4F4F4" stroke="#9A9A9A" stroke-width="1"/>
<line x1="170.5" y1="434.5" x2="174.5" y2="434.5" stroke="#2A4A9A" stroke-width="1.2" />
<line x1="172.5" y1="432.5" x2="172.5" y2="436.5" stroke="#2A4A9A" stroke-width="1.2" />
<path d="M184.5 440.5 V425.5 H192.5 L196.5 429.5 V440.5 Z" stroke="#8A8A8A" stroke-width="0.9" fill="#FAFAFA" />
<path d="M192.5 425.5 V429.5 H196.5" stroke="#8A8A8A" stroke-width="0.8" fill="none" />
<rect x="186" y="433" width="3.5" height="3" fill="none" stroke="#5A70A8" stroke-width="0.9"/>
<rect x="191" y="430" width="3" height="3" fill="none" stroke="#5A70A8" stroke-width="0.9"/>
<rect x="191" y="435.5" width="3" height="3" fill="none" stroke="#5A70A8" stroke-width="0.9"/>
<path d="M184 425 H190 L184 431 Z" stroke="none" stroke-width="1" fill="#F08A30" />
<text x="206.5" y="438.7" font-size="14.5" fill="#000000" font-weight="normal" text-anchor="start" textLength="43.2" lengthAdjust="spacingAndGlyphs" xml:space="preserve">1  (.PS)</text>
<rect x="168.5" y="452.5" width="8" height="8" rx="1" fill="#F4F4F4" stroke="#9A9A9A" stroke-width="1"/>
<line x1="170.5" y1="456.5" x2="174.5" y2="456.5" stroke="#2A4A9A" stroke-width="1.2" />
<line x1="172.5" y1="454.5" x2="172.5" y2="458.5" stroke="#2A4A9A" stroke-width="1.2" />
<path d="M184.5 462.5 V447.5 H192.5 L196.5 451.5 V462.5 Z" stroke="#8A8A8A" stroke-width="0.9" fill="#FAFAFA" />
<path d="M192.5 447.5 V451.5 H196.5" stroke="#8A8A8A" stroke-width="0.8" fill="none" />
<rect x="186" y="455" width="3.5" height="3" fill="none" stroke="#5A70A8" stroke-width="0.9"/>
<rect x="191" y="452" width="3" height="3" fill="none" stroke="#5A70A8" stroke-width="0.9"/>
<rect x="191" y="457.5" width="3" height="3" fill="none" stroke="#5A70A8" stroke-width="0.9"/>
<text x="206.5" y="460.7" font-size="14.5" fill="#000000" font-weight="normal" text-anchor="start" textLength="43.7" lengthAdjust="spacingAndGlyphs" xml:space="preserve">2  (.ES)</text>
<rect x="168.5" y="474.5" width="8" height="8" rx="1" fill="#F4F4F4" stroke="#9A9A9A" stroke-width="1"/>
<line x1="170.5" y1="478.5" x2="174.5" y2="478.5" stroke="#2A4A9A" stroke-width="1.2" />
<line x1="172.5" y1="476.5" x2="172.5" y2="480.5" stroke="#2A4A9A" stroke-width="1.2" />
<path d="M184.5 484.5 V469.5 H192.5 L196.5 473.5 V484.5 Z" stroke="#8A8A8A" stroke-width="0.9" fill="#FAFAFA" />
<path d="M192.5 469.5 V473.5 H196.5" stroke="#8A8A8A" stroke-width="0.8" fill="none" />
<rect x="186" y="477" width="3.5" height="3" fill="none" stroke="#5A70A8" stroke-width="0.9"/>
<rect x="191" y="474" width="3" height="3" fill="none" stroke="#5A70A8" stroke-width="0.9"/>
<rect x="191" y="479.5" width="3" height="3" fill="none" stroke="#5A70A8" stroke-width="0.9"/>
<text x="206.5" y="482.7" font-size="14.5" fill="#000000" font-weight="normal" text-anchor="start" textLength="46.6" lengthAdjust="spacingAndGlyphs" xml:space="preserve">3  (.OP)</text>
<rect x="168.5" y="496.5" width="8" height="8" rx="1" fill="#F4F4F4" stroke="#9A9A9A" stroke-width="1"/>
<line x1="170.5" y1="500.5" x2="174.5" y2="500.5" stroke="#2A4A9A" stroke-width="1.2" />
<line x1="172.5" y1="498.5" x2="172.5" y2="502.5" stroke="#2A4A9A" stroke-width="1.2" />
<path d="M184.5 506.5 V491.5 H192.5 L196.5 495.5 V506.5 Z" stroke="#8A8A8A" stroke-width="0.9" fill="#FAFAFA" />
<path d="M192.5 491.5 V495.5 H196.5" stroke="#8A8A8A" stroke-width="0.8" fill="none" />
<rect x="186" y="499" width="3.5" height="3" fill="none" stroke="#5A70A8" stroke-width="0.9"/>
<rect x="191" y="496" width="3" height="3" fill="none" stroke="#5A70A8" stroke-width="0.9"/>
<rect x="191" y="501.5" width="3" height="3" fill="none" stroke="#5A70A8" stroke-width="0.9"/>
<text x="206.5" y="504.7" font-size="14.5" fill="#000000" font-weight="normal" text-anchor="start" textLength="50.7" lengthAdjust="spacingAndGlyphs" xml:space="preserve">4  (.PLC)</text>
<rect x="203" y="510" width="259" height="22" fill="#BFCDDB" />
<rect x="168.5" y="518.5" width="8" height="8" rx="1" fill="#F4F4F4" stroke="#9A9A9A" stroke-width="1"/>
<line x1="170.5" y1="522.5" x2="174.5" y2="522.5" stroke="#2A4A9A" stroke-width="1.2" />
<line x1="172.5" y1="520.5" x2="172.5" y2="524.5" stroke="#2A4A9A" stroke-width="1.2" />
<path d="M184.5 528.5 V513.5 H192.5 L196.5 517.5 V528.5 Z" stroke="#8A8A8A" stroke-width="0.9" fill="#FAFAFA" />
<path d="M192.5 513.5 V517.5 H196.5" stroke="#8A8A8A" stroke-width="0.8" fill="none" />
<rect x="186" y="521" width="3.5" height="3" fill="none" stroke="#5A70A8" stroke-width="0.9"/>
<rect x="191" y="518" width="3" height="3" fill="none" stroke="#5A70A8" stroke-width="0.9"/>
<rect x="191" y="523.5" width="3" height="3" fill="none" stroke="#5A70A8" stroke-width="0.9"/>
<circle cx="193.5" cy="522" r="2.3" fill="#D8A878"/>
<path d="M189.5 529 C 189.5 525 197.5 525 197.5 529 Z" stroke="none" stroke-width="1" fill="#3A9A5A" />
<text x="206.5" y="526.7" font-size="14.5" fill="#F4F6F8" font-weight="normal" text-anchor="start" textLength="56.9" lengthAdjust="spacingAndGlyphs" xml:space="preserve">5  (.DRV)</text>
<rect x="168.5" y="540.5" width="8" height="8" rx="1" fill="#F4F4F4" stroke="#9A9A9A" stroke-width="1"/>
<line x1="170.5" y1="544.5" x2="174.5" y2="544.5" stroke="#2A4A9A" stroke-width="1.2" />
<line x1="172.5" y1="542.5" x2="172.5" y2="546.5" stroke="#2A4A9A" stroke-width="1.2" />
<path d="M184.5 550.5 V535.5 H192.5 L196.5 539.5 V550.5 Z" stroke="#8A8A8A" stroke-width="0.9" fill="#FAFAFA" />
<path d="M192.5 535.5 V539.5 H196.5" stroke="#8A8A8A" stroke-width="0.8" fill="none" />
<rect x="186" y="543" width="3.5" height="3" fill="none" stroke="#5A70A8" stroke-width="0.9"/>
<rect x="191" y="540" width="3" height="3" fill="none" stroke="#5A70A8" stroke-width="0.9"/>
<rect x="191" y="545.5" width="3" height="3" fill="none" stroke="#5A70A8" stroke-width="0.9"/>
<text x="206.5" y="548.7" font-size="14.5" fill="#000000" font-weight="normal" text-anchor="start" textLength="56.9" lengthAdjust="spacingAndGlyphs" xml:space="preserve">6  (.DRV)</text>
<rect x="168.5" y="562.5" width="8" height="8" rx="1" fill="#F4F4F4" stroke="#9A9A9A" stroke-width="1"/>
<line x1="170.5" y1="566.5" x2="174.5" y2="566.5" stroke="#2A4A9A" stroke-width="1.2" />
<line x1="172.5" y1="564.5" x2="172.5" y2="568.5" stroke="#2A4A9A" stroke-width="1.2" />
<path d="M184.5 572.5 V557.5 H192.5 L196.5 561.5 V572.5 Z" stroke="#8A8A8A" stroke-width="0.9" fill="#FAFAFA" />
<path d="M192.5 557.5 V561.5 H196.5" stroke="#8A8A8A" stroke-width="0.8" fill="none" />
<rect x="186" y="565" width="3.5" height="3" fill="none" stroke="#5A70A8" stroke-width="0.9"/>
<rect x="191" y="562" width="3" height="3" fill="none" stroke="#5A70A8" stroke-width="0.9"/>
<rect x="191" y="567.5" width="3" height="3" fill="none" stroke="#5A70A8" stroke-width="0.9"/>
<text x="206.5" y="570.7" font-size="14.5" fill="#000000" font-weight="normal" text-anchor="start" textLength="57.8" lengthAdjust="spacingAndGlyphs" xml:space="preserve">7  (.HYD)</text>
<rect x="168.5" y="584.5" width="8" height="8" rx="1" fill="#F4F4F4" stroke="#9A9A9A" stroke-width="1"/>
<line x1="170.5" y1="588.5" x2="174.5" y2="588.5" stroke="#2A4A9A" stroke-width="1.2" />
<line x1="172.5" y1="586.5" x2="172.5" y2="590.5" stroke="#2A4A9A" stroke-width="1.2" />
<path d="M184.5 594.5 V579.5 H192.5 L196.5 583.5 V594.5 Z" stroke="#8A8A8A" stroke-width="0.9" fill="#FAFAFA" />
<path d="M192.5 579.5 V583.5 H196.5" stroke="#8A8A8A" stroke-width="0.8" fill="none" />
<rect x="186" y="587" width="3.5" height="3" fill="none" stroke="#5A70A8" stroke-width="0.9"/>
<rect x="191" y="584" width="3" height="3" fill="none" stroke="#5A70A8" stroke-width="0.9"/>
<rect x="191" y="589.5" width="3" height="3" fill="none" stroke="#5A70A8" stroke-width="0.9"/>
<text x="206.5" y="592.7" font-size="14.5" fill="#000000" font-weight="normal" text-anchor="start" textLength="57.8" lengthAdjust="spacingAndGlyphs" xml:space="preserve">8  (.HYD)</text>
<defs><pattern id="hatch" width="2" height="2" patternUnits="userSpaceOnUse"><rect width="2" height="2" fill="#F4F4F4"/><rect width="1" height="1" fill="#E8E8E8"/><rect x="1" y="1" width="1" height="1" fill="#E8E8E8"/></pattern></defs>
<rect x="462" y="338" width="20" height="257" fill="url(#hatch)" />
<rect x="462.5" y="339.0" width="19" height="19" fill="#F0F0F0" stroke="#FFFFFF" stroke-width="1"/>
<line x1="462" y1="358.0" x2="482" y2="358.0" stroke="#696969" stroke-width="1" />
<line x1="481.5" y1="338.5" x2="481.5" y2="358.5" stroke="#A0A0A0" stroke-width="1" />
<path d="M467.0 351.0 H477.0 L472.0 346.0 Z" stroke="none" stroke-width="1" fill="#000" />
<rect x="462.5" y="433.0" width="19" height="43.5" fill="#F0F0F0" stroke="#FFFFFF" stroke-width="1"/>
<line x1="462" y1="476.5" x2="482" y2="476.5" stroke="#696969" stroke-width="1" />
<line x1="481.5" y1="432.5" x2="481.5" y2="477.0" stroke="#A0A0A0" stroke-width="1" />
<rect x="462.5" y="577.5" width="19" height="17.5" fill="#F0F0F0" stroke="#FFFFFF" stroke-width="1"/>
<line x1="462" y1="595.0" x2="482" y2="595.0" stroke="#696969" stroke-width="1" />
<line x1="481.5" y1="577" x2="481.5" y2="595.5" stroke="#A0A0A0" stroke-width="1" />
<path d="M467.0 583.75 H477.0 L472.0 588.75 Z" stroke="none" stroke-width="1" fill="#000" />
<line x1="109" y1="600.5" x2="476" y2="600.5" stroke="#D0D0D0" stroke-width="1" />
<rect x="104" y="605.5" width="378" height="39" fill="#C5D6F0" />
<path d="M112 610 H138 V637 H124 L112 633 Z" stroke="none" stroke-width="1" fill="#6E6E6E" />
<rect x="116" y="611.5" width="20.5" height="22.5" fill="#FFFFFF" />
<rect x="119" y="614.5" width="15.5" height="19.5" fill="#8A8A8A" />
<rect x="121" y="617" width="12" height="5" fill="#5A5A5A" />
<rect x="124.5" y="620.5" width="7.5" height="11" fill="#D8A880" />
<rect x="124.5" y="626" width="7.5" height="5.5" fill="#B88858" />
<rect x="131" y="620" width="2.5" height="6" fill="#3A3A3A" />
<path d="M120.5 639.5 V631 C 123 628.5 134 628.5 137.5 631 V639.5 Z" stroke="none" stroke-width="1" fill="#78B898" />
<rect x="112" y="610" width="4" height="23" fill="#003A00" />
<rect x="116" y="610" width="9" height="22" fill="#2ACA2A" />
<rect x="116" y="612" width="9" height="2" fill="#6AF06A" />
<path d="M112 633 H125 V629 H121 V638 H116 L112 634 Z" stroke="none" stroke-width="1" fill="#0A7A0A" />
<rect x="116" y="636" width="6" height="3" fill="#000000" />
<rect x="122" y="638.5" width="6" height="1.5" fill="#000000" />
<text x="146.5" y="631.6" font-size="14.5" fill="#3A3A3A" font-weight="bold" text-anchor="start" textLength="168.5" lengthAdjust="spacingAndGlyphs" >Projekt [Beispielprojekt]</text>
<path d="M319 674 V656.5 H325 L327 658 H330 V674 Z" stroke="#A08020" stroke-width="0.8" fill="#E8C860" />
<path d="M319 674 L321 659 H326 L326 674 Z" stroke="none" stroke-width="1" fill="#F8E090" />
<rect x="327" y="657" width="11" height="17" fill="#6A6A6A" />
<rect x="329.5" y="659" width="6" height="13" fill="#D8D8D8" />
<rect x="327.5" y="658" width="1.5" height="2" fill="#FFF" />
<rect x="336" y="658" width="1.5" height="2" fill="#FFF" />
<rect x="327.5" y="662" width="1.5" height="2" fill="#FFF" />
<rect x="336" y="662" width="1.5" height="2" fill="#FFF" />
<rect x="327.5" y="666" width="1.5" height="2" fill="#FFF" />
<rect x="336" y="666" width="1.5" height="2" fill="#FFF" />
<rect x="327.5" y="670" width="1.5" height="2" fill="#FFF" />
<rect x="336" y="670" width="1.5" height="2" fill="#FFF" />
<path d="M347 674 V656.5 H353 L355 658 H358 V674 Z" stroke="#A08020" stroke-width="0.8" fill="#E8C860" />
<path d="M347 674 L349 659 H354 L354 674 Z" stroke="none" stroke-width="1" fill="#F8E090" />
<rect x="354" y="660" width="11" height="12" fill="#4A6A9A" />
<rect x="356" y="663" width="6" height="6" fill="#D8D8E8" />
<path d="M352 668 L358 674" stroke="#A03040" stroke-width="1.5" fill="none" />
<path d="M375 674 V656.5 H381 L383 658 H386 V674 Z" stroke="#A08020" stroke-width="0.8" fill="#E8C860" />
<path d="M375 674 L377 659 H382 L382 674 Z" stroke="none" stroke-width="1" fill="#F8E090" />
<rect x="382" y="657" width="12" height="17" fill="#FAFAFA" stroke="#8A8A8A" stroke-width="0.8"/>
<rect x="384" y="665" width="4" height="3" fill="#6A8AC0" />
<rect x="389" y="660" width="3" height="3" fill="#6A8AC0" />
<rect x="389" y="668" width="3" height="3" fill="#6A8AC0" />
<path d="M402.5 666 L408 660.5 V663.5 H415.5 V657.5 H420.5 V668.5 H408 V671.5 Z" stroke="#1A8A1A" stroke-width="1" fill="#5ACA3A" />
<path d="M431 674 V656.5 H437 L439 658 H442 V674 Z" stroke="#A08020" stroke-width="0.8" fill="#E8C860" />
<path d="M431 674 L433 659 H438 L438 674 Z" stroke="none" stroke-width="1" fill="#F8E090" />
<rect x="438" y="659" width="12" height="15" fill="#7A7A7A" />
<rect x="440" y="661" width="8" height="4" fill="#D0D0D0" />
<rect x="440" y="667" width="8" height="4" fill="#C0C0C0" />
<rect x="444" y="656" width="6" height="3" fill="#F08A20" />
<path d="M459 674 V656.5 H465 L467 658 H470 V674 Z" stroke="#A08020" stroke-width="0.8" fill="#E8C860" />
<path d="M459 674 L461 659 H466 L466 674 Z" stroke="none" stroke-width="1" fill="#F8E090" />
<rect x="466" y="657" width="12" height="17" fill="#1A5AD0" />
<rect x="467.5" y="659" width="3.5" height="4" fill="#FFFFFF" />
<rect x="472.5" y="659" width="3.5" height="4" fill="#FFFFFF" />
<rect x="467.5" y="666" width="3.5" height="4" fill="#FFFFFF" />
<rect x="472.5" y="666" width="3.5" height="4" fill="#FFFFFF" />
<rect x="104" y="685" width="378" height="5" fill="#EBEBEB" />
<rect x="104" y="690" width="378" height="306" fill="#FFFFFF" />
<rect x="105.5" y="691.5" width="375" height="263.5" fill="none" stroke="#1A1A1A" stroke-width="1.3"/>
<rect x="110" y="695.8" width="366.8" height="255" fill="none" stroke="#1A1A1A" stroke-width="1.3"/>
<line x1="105.5" y1="691.5" x2="110" y2="695.8" stroke="#1A1A1A" stroke-width="0.8" />
<line x1="480.5" y1="691.5" x2="476.8" y2="695.8" stroke="#1A1A1A" stroke-width="0.8" />
<line x1="105.5" y1="955" x2="110" y2="950.8" stroke="#1A1A1A" stroke-width="0.8" />
<line x1="480.5" y1="955" x2="476.8" y2="950.8" stroke="#1A1A1A" stroke-width="0.8" />
<line x1="152.4" y1="691.5" x2="152.4" y2="695.8" stroke="#1A1A1A" stroke-width="1" />
<line x1="152.4" y1="950.8" x2="152.4" y2="955" stroke="#1A1A1A" stroke-width="1" />
<line x1="199.4" y1="691.5" x2="199.4" y2="695.8" stroke="#1A1A1A" stroke-width="1" />
<line x1="199.4" y1="950.8" x2="199.4" y2="955" stroke="#1A1A1A" stroke-width="1" />
<line x1="246.4" y1="691.5" x2="246.4" y2="695.8" stroke="#1A1A1A" stroke-width="1" />
<line x1="246.4" y1="950.8" x2="246.4" y2="955" stroke="#1A1A1A" stroke-width="1" />
<line x1="293.3" y1="691.5" x2="293.3" y2="695.8" stroke="#1A1A1A" stroke-width="1" />
<line x1="293.3" y1="950.8" x2="293.3" y2="955" stroke="#1A1A1A" stroke-width="1" />
<line x1="340.3" y1="691.5" x2="340.3" y2="695.8" stroke="#1A1A1A" stroke-width="1" />
<line x1="340.3" y1="950.8" x2="340.3" y2="955" stroke="#1A1A1A" stroke-width="1" />
<line x1="387.2" y1="691.5" x2="387.2" y2="695.8" stroke="#1A1A1A" stroke-width="1" />
<line x1="387.2" y1="950.8" x2="387.2" y2="955" stroke="#1A1A1A" stroke-width="1" />
<line x1="434.1" y1="691.5" x2="434.1" y2="695.8" stroke="#1A1A1A" stroke-width="1" />
<line x1="434.1" y1="950.8" x2="434.1" y2="955" stroke="#1A1A1A" stroke-width="1" />
<line x1="105.5" y1="735.5" x2="110" y2="735.5" stroke="#1A1A1A" stroke-width="1" />
<line x1="476.8" y1="735.5" x2="480.5" y2="735.5" stroke="#1A1A1A" stroke-width="1" />
<line x1="105.5" y1="779.5" x2="110" y2="779.5" stroke="#1A1A1A" stroke-width="1" />
<line x1="476.8" y1="779.5" x2="480.5" y2="779.5" stroke="#1A1A1A" stroke-width="1" />
<line x1="105.5" y1="823.5" x2="110" y2="823.5" stroke="#1A1A1A" stroke-width="1" />
<line x1="476.8" y1="823.5" x2="480.5" y2="823.5" stroke="#1A1A1A" stroke-width="1" />
<line x1="105.5" y1="867.5" x2="110" y2="867.5" stroke="#1A1A1A" stroke-width="1" />
<line x1="476.8" y1="867.5" x2="480.5" y2="867.5" stroke="#1A1A1A" stroke-width="1" />
<line x1="105.5" y1="911.5" x2="110" y2="911.5" stroke="#1A1A1A" stroke-width="1" />
<line x1="476.8" y1="911.5" x2="480.5" y2="911.5" stroke="#1A1A1A" stroke-width="1" />
<line x1="123.4" y1="695.8" x2="123.4" y2="950.8" stroke="#1A1A1A" stroke-width="1.2" />
<rect x="112" y="868.5" width="8.2" height="35.5" fill="#2E3E6E" />
<line x1="115.5" y1="871" x2="117" y2="872.5" stroke="#C8D0E8" stroke-width="0.8" />
<line x1="115.5" y1="874" x2="117" y2="875.5" stroke="#C8D0E8" stroke-width="0.8" />
<line x1="115.5" y1="877" x2="117" y2="878.5" stroke="#C8D0E8" stroke-width="0.8" />
<line x1="115.5" y1="880" x2="117" y2="881.5" stroke="#C8D0E8" stroke-width="0.8" />
<line x1="115.5" y1="883" x2="117" y2="884.5" stroke="#C8D0E8" stroke-width="0.8" />
<line x1="115.5" y1="886" x2="117" y2="887.5" stroke="#C8D0E8" stroke-width="0.8" />
<line x1="115.5" y1="889" x2="117" y2="890.5" stroke="#C8D0E8" stroke-width="0.8" />
<line x1="115.5" y1="892" x2="117" y2="893.5" stroke="#C8D0E8" stroke-width="0.8" />
<line x1="115.5" y1="895" x2="117" y2="896.5" stroke="#C8D0E8" stroke-width="0.8" />
<line x1="115.5" y1="898" x2="117" y2="899.5" stroke="#C8D0E8" stroke-width="0.8" />
<line x1="115.5" y1="901" x2="117" y2="902.5" stroke="#C8D0E8" stroke-width="0.8" />
<line x1="115" y1="700" x2="116" y2="701.5" stroke="#8A9AC8" stroke-width="0.9" />
<line x1="115" y1="702" x2="116" y2="703.5" stroke="#8A9AC8" stroke-width="0.9" />
<line x1="115" y1="704" x2="116" y2="705.5" stroke="#8A9AC8" stroke-width="0.9" />
<line x1="115" y1="706" x2="116" y2="707.5" stroke="#8A9AC8" stroke-width="0.9" />
<line x1="115" y1="708" x2="116" y2="709.5" stroke="#8A9AC8" stroke-width="0.9" />
<line x1="115" y1="710" x2="116" y2="711.5" stroke="#8A9AC8" stroke-width="0.9" />
<line x1="115" y1="712" x2="116" y2="713.5" stroke="#8A9AC8" stroke-width="0.9" />
<line x1="115" y1="714" x2="116" y2="715.5" stroke="#8A9AC8" stroke-width="0.9" />
<line x1="115" y1="716" x2="116" y2="717.5" stroke="#8A9AC8" stroke-width="0.9" />
<line x1="115" y1="718" x2="116" y2="719.5" stroke="#8A9AC8" stroke-width="0.9" />
<line x1="115" y1="720" x2="116" y2="721.5" stroke="#8A9AC8" stroke-width="0.9" />
<line x1="115" y1="722" x2="116" y2="723.5" stroke="#8A9AC8" stroke-width="0.9" />
<line x1="115" y1="724" x2="116" y2="725.5" stroke="#8A9AC8" stroke-width="0.9" />
<line x1="115" y1="726" x2="116" y2="727.5" stroke="#8A9AC8" stroke-width="0.9" />
<line x1="115" y1="728" x2="116" y2="729.5" stroke="#8A9AC8" stroke-width="0.9" />
<line x1="115" y1="730" x2="116" y2="731.5" stroke="#8A9AC8" stroke-width="0.9" />
<line x1="115" y1="732" x2="116" y2="733.5" stroke="#8A9AC8" stroke-width="0.9" />
<line x1="115" y1="734" x2="116" y2="735.5" stroke="#8A9AC8" stroke-width="0.9" />
<line x1="115" y1="736" x2="116" y2="737.5" stroke="#8A9AC8" stroke-width="0.9" />
<line x1="115" y1="738" x2="116" y2="739.5" stroke="#8A9AC8" stroke-width="0.9" />
<line x1="115" y1="740" x2="116" y2="741.5" stroke="#8A9AC8" stroke-width="0.9" />
<line x1="115" y1="742" x2="116" y2="743.5" stroke="#8A9AC8" stroke-width="0.9" />
<line x1="115" y1="744" x2="116" y2="745.5" stroke="#8A9AC8" stroke-width="0.9" />
<line x1="115" y1="746" x2="116" y2="747.5" stroke="#8A9AC8" stroke-width="0.9" />
<line x1="115" y1="748" x2="116" y2="749.5" stroke="#8A9AC8" stroke-width="0.9" />
<line x1="115" y1="750" x2="116" y2="751.5" stroke="#8A9AC8" stroke-width="0.9" />
<line x1="114.5" y1="909" x2="115.5" y2="910.5" stroke="#6A5A6A" stroke-width="0.9" />
<line x1="114.5" y1="912" x2="115.5" y2="913.5" stroke="#6A5A6A" stroke-width="0.9" />
<line x1="114.5" y1="915" x2="115.5" y2="916.5" stroke="#6A5A6A" stroke-width="0.9" />
<line x1="114.5" y1="918" x2="115.5" y2="919.5" stroke="#6A5A6A" stroke-width="0.9" />
<line x1="114.5" y1="921" x2="115.5" y2="922.5" stroke="#6A5A6A" stroke-width="0.9" />
<line x1="148.3" y1="702.6" x2="229" y2="702.6" stroke="#1A1A1A" stroke-width="1.2" />
<path d="M146 701.1 L148.5 702.6 L146 704.1" stroke="#1A1A1A" stroke-width="0.8" fill="none" />
<circle cx="229.5" cy="702.6" r="1.2" fill="#1A1A1A"/>
<line x1="138" y1="702.6" x2="139" y2="702.6" stroke="#B080B0" stroke-width="1" />
<line x1="141" y1="702.6" x2="142" y2="702.6" stroke="#B080B0" stroke-width="1" />
<line x1="144" y1="702.6" x2="145" y2="702.6" stroke="#B080B0" stroke-width="1" />
<line x1="232" y1="702.6" x2="234" y2="702.6" stroke="#80A0D0" stroke-width="1" />
<line x1="236" y1="702.6" x2="238" y2="702.6" stroke="#80A0D0" stroke-width="1" />
<line x1="148.3" y1="709.9" x2="229" y2="709.9" stroke="#1A1A1A" stroke-width="1.2" />
<path d="M146 708.4 L148.5 709.9 L146 711.4" stroke="#1A1A1A" stroke-width="0.8" fill="none" />
<circle cx="229.5" cy="709.9" r="1.2" fill="#1A1A1A"/>
<line x1="138" y1="709.9" x2="139" y2="709.9" stroke="#B080B0" stroke-width="1" />
<line x1="141" y1="709.9" x2="142" y2="709.9" stroke="#B080B0" stroke-width="1" />
<line x1="144" y1="709.9" x2="145" y2="709.9" stroke="#B080B0" stroke-width="1" />
<line x1="232" y1="709.9" x2="234" y2="709.9" stroke="#80A0D0" stroke-width="1" />
<line x1="236" y1="709.9" x2="238" y2="709.9" stroke="#80A0D0" stroke-width="1" />
<line x1="148.3" y1="716.9" x2="229" y2="716.9" stroke="#1A1A1A" stroke-width="1.2" />
<path d="M146 715.4 L148.5 716.9 L146 718.4" stroke="#1A1A1A" stroke-width="0.8" fill="none" />
<circle cx="229.5" cy="716.9" r="1.2" fill="#1A1A1A"/>
<line x1="138" y1="716.9" x2="139" y2="716.9" stroke="#B080B0" stroke-width="1" />
<line x1="141" y1="716.9" x2="142" y2="716.9" stroke="#B080B0" stroke-width="1" />
<line x1="144" y1="716.9" x2="145" y2="716.9" stroke="#B080B0" stroke-width="1" />
<line x1="232" y1="716.9" x2="234" y2="716.9" stroke="#80A0D0" stroke-width="1" />
<line x1="236" y1="716.9" x2="238" y2="716.9" stroke="#80A0D0" stroke-width="1" />
<circle cx="169.9" cy="702.6" r="1.5" fill="#1A1A1A"/>
<line x1="169.9" y1="702.6" x2="169.9" y2="730.5" stroke="#1A1A1A" stroke-width="1.2" />
<path d="M169.9 730.5 L172.4 734.5" stroke="#1A1A1A" stroke-width="1" fill="none" />
<line x1="169.9" y1="736" x2="169.9" y2="738.4" stroke="#1A1A1A" stroke-width="1.2" />
<line x1="169.9" y1="745.7" x2="169.9" y2="945" stroke="#1A1A1A" stroke-width="0" />
<circle cx="177" cy="709.9" r="1.5" fill="#1A1A1A"/>
<line x1="177" y1="709.9" x2="177" y2="730.5" stroke="#1A1A1A" stroke-width="1.2" />
<path d="M177 730.5 L179.5 734.5" stroke="#1A1A1A" stroke-width="1" fill="none" />
<line x1="177" y1="736" x2="177" y2="738.4" stroke="#1A1A1A" stroke-width="1.2" />
<line x1="177" y1="745.7" x2="177" y2="945" stroke="#1A1A1A" stroke-width="0" />
<circle cx="184" cy="716.9" r="1.5" fill="#1A1A1A"/>
<line x1="184" y1="716.9" x2="184" y2="730.5" stroke="#1A1A1A" stroke-width="1.2" />
<path d="M184 730.5 L186.5 734.5" stroke="#1A1A1A" stroke-width="1" fill="none" />
<line x1="184" y1="736" x2="184" y2="738.4" stroke="#1A1A1A" stroke-width="1.2" />
<line x1="184" y1="745.7" x2="184" y2="945" stroke="#1A1A1A" stroke-width="0" />
<circle cx="162.6" cy="733" r="2.2" fill="#1A1A1A"/>
<line x1="162.6" y1="733" x2="162.6" y2="742" stroke="#1A1A1A" stroke-width="0.9" />
<line x1="162.6" y1="742" x2="165.8" y2="742" stroke="#1A1A1A" stroke-width="0.9" />
<line x1="164" y1="733" x2="192" y2="733" stroke="#555" stroke-width="0.7" />
<path d="M189.5 729 V739 M192.5 729 V739" stroke="#1A1A1A" stroke-width="0.9" fill="none" />
<rect x="165.8" y="738.4" width="7.3" height="7.3" fill="none" stroke="#1A1A1A" stroke-width="1"/>
<line x1="167.0" y1="743.5" x2="172.0" y2="740.5" stroke="#1A1A1A" stroke-width="0.7" />
<rect x="173.10000000000002" y="738.4" width="7.3" height="7.3" fill="none" stroke="#1A1A1A" stroke-width="1"/>
<line x1="174.3" y1="743.5" x2="179.3" y2="740.5" stroke="#1A1A1A" stroke-width="0.7" />
<rect x="180.4" y="738.4" width="7.3" height="7.3" fill="none" stroke="#1A1A1A" stroke-width="1"/>
<line x1="181.6" y1="743.5" x2="186.6" y2="740.5" stroke="#1A1A1A" stroke-width="0.7" />
<line x1="150" y1="746" x2="152" y2="746" stroke="#9A9AB0" stroke-width="0.8" />
<line x1="154" y1="746" x2="156" y2="746" stroke="#9A9AB0" stroke-width="0.8" />
<line x1="158" y1="746" x2="160" y2="746" stroke="#9A9AB0" stroke-width="0.8" />
<line x1="169.9" y1="745.7" x2="169.9" y2="794.5" stroke="#1A1A1A" stroke-width="1.2" />
<path d="M169.9 794.5 L172.4 798.5" stroke="#1A1A1A" stroke-width="0.9" fill="none" />
<line x1="169.9" y1="799.5" x2="169.9" y2="899" stroke="#1A1A1A" stroke-width="1.2" />
<line x1="177" y1="745.7" x2="177" y2="794.5" stroke="#1A1A1A" stroke-width="1.2" />
<path d="M177 794.5 L179.5 798.5" stroke="#1A1A1A" stroke-width="0.9" fill="none" />
<line x1="177" y1="799.5" x2="177" y2="899" stroke="#1A1A1A" stroke-width="1.2" />
<line x1="184" y1="745.7" x2="184" y2="794.5" stroke="#1A1A1A" stroke-width="1.2" />
<path d="M184 794.5 L186.5 798.5" stroke="#1A1A1A" stroke-width="0.9" fill="none" />
<line x1="184" y1="799.5" x2="184" y2="899" stroke="#1A1A1A" stroke-width="1.2" />
<path d="M205.7 794.5 L208.2 798.5" stroke="#1A1A1A" stroke-width="0.9" fill="none" />
<path d="M212.5 794.5 L215.0 798.5" stroke="#1A1A1A" stroke-width="0.9" fill="none" />
<path d="M220.6 794.5 L223.1 798.5" stroke="#1A1A1A" stroke-width="0.9" fill="none" />
<path d="M184 766.9 H220.6 V794.5" stroke="#1A1A1A" stroke-width="1.2" fill="none" />
<path d="M177 773.9 H212.5 V794.5" stroke="#1A1A1A" stroke-width="1.2" fill="none" />
<path d="M169.9 781.2 H205.7 V794.5" stroke="#1A1A1A" stroke-width="1.2" fill="none" />
<path d="M205.7 799.5 V809.2 H184" stroke="#1A1A1A" stroke-width="1.2" fill="none" />
<path d="M212.5 799.5 V816.5 H177" stroke="#1A1A1A" stroke-width="1.2" fill="none" />
<path d="M220.6 799.5 V823.5 H169.9" stroke="#1A1A1A" stroke-width="1.2" fill="none" />
<line x1="140" y1="795.5" x2="141.5" y2="795.5" stroke="#9090B0" stroke-width="0.8" />
<line x1="143" y1="795.5" x2="144.5" y2="795.5" stroke="#9090B0" stroke-width="0.8" />
<line x1="146" y1="795.5" x2="147.5" y2="795.5" stroke="#9090B0" stroke-width="0.8" />
<line x1="199" y1="795.5" x2="200.5" y2="795.5" stroke="#9090B0" stroke-width="0.8" />
<line x1="202" y1="795.5" x2="203.5" y2="795.5" stroke="#9090B0" stroke-width="0.8" />
<line x1="148.3" y1="845.2" x2="157" y2="845.2" stroke="#1A1A1A" stroke-width="1" />
<path d="M146 843.7 L148.5 845.2 L146 846.7" stroke="#1A1A1A" stroke-width="0.8" fill="none" />
<line x1="157" y1="845.2" x2="222" y2="845.2" stroke="#333" stroke-width="0.6" />
<circle cx="191.4" cy="845.2" r="1.6" fill="#111"/>
<line x1="220" y1="845.2" x2="229" y2="845.2" stroke="#1A1A1A" stroke-width="1" />
<path d="M227.5 843.7 L230 845.2 L227.5 846.7" stroke="#1A1A1A" stroke-width="0.8" fill="none" />
<line x1="191.4" y1="845.2" x2="191.4" y2="899" stroke="#333" stroke-width="0.6" />
<circle cx="169.9" cy="859.1" r="1.3" fill="#fff" stroke="#1A1A1A" stroke-width="0.8"/>
<circle cx="177" cy="859.1" r="1.3" fill="#fff" stroke="#1A1A1A" stroke-width="0.8"/>
<circle cx="184" cy="859.1" r="1.3" fill="#fff" stroke="#1A1A1A" stroke-width="0.8"/>
<circle cx="191.4" cy="859.1" r="1.3" fill="#fff" stroke="#1A1A1A" stroke-width="0.8"/>
<line x1="162.6" y1="877" x2="195" y2="877" stroke="#1A1A1A" stroke-width="1" />
<line x1="162.6" y1="874" x2="162.6" y2="880" stroke="#1A1A1A" stroke-width="1" />
<path d="M169.9 899 L174 902 M184 899 L180 902 M191.4 896 V899 L186 903.6 H182.5" stroke="#1A1A1A" stroke-width="0.9" fill="none" />
<circle cx="177" cy="903.6" r="5.5" fill="#fff" stroke="#1A1A1A" stroke-width="1"/>
<line x1="153" y1="905" x2="166" y2="905" stroke="#A8A0B8" stroke-width="0.8" />
<line x1="160" y1="908" x2="166" y2="908" stroke="#A8A0B8" stroke-width="0.8" />
<line x1="158" y1="911" x2="166" y2="911" stroke="#A8A0B8" stroke-width="0.8" />
<line x1="153" y1="914" x2="166" y2="914" stroke="#A8A0B8" stroke-width="0.8" />
<line x1="160" y1="861" x2="166" y2="861" stroke="#A8A0B8" stroke-width="0.8" />
<line x1="155" y1="877" x2="160" y2="877" stroke="#A8A0B8" stroke-width="0.8" />
<line x1="157" y1="880" x2="160" y2="880" stroke="#A8A0B8" stroke-width="0.8" />
<line x1="160" y1="897" x2="166" y2="897" stroke="#A8A0B8" stroke-width="0.8" />
<line x1="160" y1="900" x2="166" y2="900" stroke="#A8A0B8" stroke-width="0.8" />
<line x1="288" y1="702.9" x2="448" y2="702.9" stroke="#1A1A1A" stroke-width="1.3" />
<circle cx="448" cy="702.9" r="1.3" fill="#1A1A1A"/>
<line x1="316.5" y1="702.9" x2="316.5" y2="729.5" stroke="#1A1A1A" stroke-width="1.3" />
<path d="M314.5 730 L317.0 736" stroke="#1A1A1A" stroke-width="0.9" fill="none" />
<line x1="316.5" y1="736.5" x2="316.5" y2="759.5" stroke="#1A1A1A" stroke-width="1.3" />
<line x1="304.5" y1="731" x2="306.5" y2="731" stroke="#A090B0" stroke-width="0.8" />
<line x1="307.5" y1="731" x2="309.5" y2="731" stroke="#A090B0" stroke-width="0.8" />
<line x1="363.1" y1="702.9" x2="363.1" y2="729.5" stroke="#1A1A1A" stroke-width="1.3" />
<path d="M361.1 730 L363.6 736" stroke="#1A1A1A" stroke-width="0.9" fill="none" />
<line x1="363.1" y1="736.5" x2="363.1" y2="759.5" stroke="#1A1A1A" stroke-width="1.3" />
<line x1="351.1" y1="731" x2="353.1" y2="731" stroke="#A090B0" stroke-width="0.8" />
<line x1="354.1" y1="731" x2="356.1" y2="731" stroke="#A090B0" stroke-width="0.8" />
<line x1="409.2" y1="702.9" x2="409.2" y2="729.5" stroke="#1A1A1A" stroke-width="1.3" />
<path d="M407.2 730 L409.7 736" stroke="#1A1A1A" stroke-width="0.9" fill="none" />
<line x1="409.2" y1="736.5" x2="409.2" y2="759.5" stroke="#1A1A1A" stroke-width="1.3" />
<line x1="397.2" y1="731" x2="399.2" y2="731" stroke="#A090B0" stroke-width="0.8" />
<line x1="400.2" y1="731" x2="402.2" y2="731" stroke="#A090B0" stroke-width="0.8" />
<rect x="298.5" y="759.5" width="36" height="21.8" fill="#FFFFFF" stroke="#1A1A1A" stroke-width="1.2"/>
<line x1="298.5" y1="773.3" x2="334.5" y2="773.3" stroke="#1A1A1A" stroke-width="1" />
<line x1="298.5" y1="777.2" x2="334.5" y2="777.2" stroke="#1A1A1A" stroke-width="1" />
<line x1="306.5" y1="763" x2="326.5" y2="763" stroke="#B8B0C0" stroke-width="0.7" />
<line x1="306.5" y1="765.5" x2="326.5" y2="765.5" stroke="#B8B0C0" stroke-width="0.7" />
<line x1="306.5" y1="768" x2="326.5" y2="768" stroke="#B8B0C0" stroke-width="0.7" />
<rect x="345" y="759.5" width="36" height="21.8" fill="#FFFFFF" stroke="#1A1A1A" stroke-width="1.2"/>
<line x1="345" y1="773.3" x2="381" y2="773.3" stroke="#1A1A1A" stroke-width="1" />
<line x1="345" y1="777.2" x2="381" y2="777.2" stroke="#1A1A1A" stroke-width="1" />
<line x1="353" y1="763" x2="373" y2="763" stroke="#B8B0C0" stroke-width="0.7" />
<line x1="353" y1="765.5" x2="373" y2="765.5" stroke="#B8B0C0" stroke-width="0.7" />
<line x1="353" y1="768" x2="373" y2="768" stroke="#B8B0C0" stroke-width="0.7" />
<rect x="391.4" y="759.5" width="36" height="21.8" fill="#FFFFFF" stroke="#1A1A1A" stroke-width="1.2"/>
<line x1="391.4" y1="773.3" x2="427.4" y2="773.3" stroke="#1A1A1A" stroke-width="1" />
<line x1="391.4" y1="777.2" x2="427.4" y2="777.2" stroke="#1A1A1A" stroke-width="1" />
<line x1="399.4" y1="763" x2="419.4" y2="763" stroke="#B8B0C0" stroke-width="0.7" />
<line x1="399.4" y1="765.5" x2="419.4" y2="765.5" stroke="#B8B0C0" stroke-width="0.7" />
<line x1="399.4" y1="768" x2="419.4" y2="768" stroke="#B8B0C0" stroke-width="0.7" />
<rect x="345" y="795.3" width="36" height="21.1" fill="#FFFFFF" stroke="#1A1A1A" stroke-width="1.2"/>
<line x1="345" y1="798.7" x2="381" y2="798.7" stroke="#1A1A1A" stroke-width="1" />
<line x1="345" y1="802.5" x2="381" y2="802.5" stroke="#1A1A1A" stroke-width="1" />
<line x1="352" y1="806" x2="374" y2="806" stroke="#B8B0C0" stroke-width="0.7" />
<line x1="352" y1="808.5" x2="374" y2="808.5" stroke="#B8B0C0" stroke-width="0.7" />
<line x1="352" y1="811" x2="374" y2="811" stroke="#B8B0C0" stroke-width="0.7" />
<rect x="391.4" y="795.3" width="36" height="21.1" fill="#FFFFFF" stroke="#1A1A1A" stroke-width="1.2"/>
<line x1="391.4" y1="798.7" x2="427.4" y2="798.7" stroke="#1A1A1A" stroke-width="1" />
<line x1="391.4" y1="802.5" x2="427.4" y2="802.5" stroke="#1A1A1A" stroke-width="1" />
<line x1="398.4" y1="806" x2="420.4" y2="806" stroke="#B8B0C0" stroke-width="0.7" />
<line x1="398.4" y1="808.5" x2="420.4" y2="808.5" stroke="#B8B0C0" stroke-width="0.7" />
<line x1="398.4" y1="811" x2="420.4" y2="811" stroke="#B8B0C0" stroke-width="0.7" />
<line x1="363.1" y1="816.4" x2="363.1" y2="833.5" stroke="#1A1A1A" stroke-width="1.3" />
<path d="M363.1 839.5 L364.6 833.5" stroke="#1A1A1A" stroke-width="0.9" fill="none" />
<line x1="363.1" y1="839.5" x2="363.1" y2="866.2" stroke="#1A1A1A" stroke-width="1.3" />
<rect x="359.1" y="851.9" width="7.8" height="3.8" fill="#FFFFFF" stroke="#1A1A1A" stroke-width="1"/>
<line x1="358.1" y1="870" x2="368.1" y2="870" stroke="#1A1A1A" stroke-width="1" />
<line x1="358.1" y1="873" x2="368.1" y2="873" stroke="#1A1A1A" stroke-width="1" />
<line x1="358.1" y1="876" x2="368.1" y2="876" stroke="#1A1A1A" stroke-width="1" />
<line x1="358.1" y1="879" x2="368.1" y2="879" stroke="#1A1A1A" stroke-width="1" />
<line x1="358.1" y1="882" x2="368.1" y2="882" stroke="#1A1A1A" stroke-width="1" />
<line x1="358.1" y1="885" x2="368.1" y2="885" stroke="#1A1A1A" stroke-width="1" />
<line x1="363.1" y1="868" x2="363.1" y2="888" stroke="#1A1A1A" stroke-width="1" />
<line x1="338.1" y1="859.5" x2="355.1" y2="859.5" stroke="#B0A8C0" stroke-width="0.7" />
<line x1="409.2" y1="816.4" x2="409.2" y2="833.5" stroke="#1A1A1A" stroke-width="1.3" />
<path d="M409.2 839.5 L410.7 833.5" stroke="#1A1A1A" stroke-width="0.9" fill="none" />
<line x1="409.2" y1="839.5" x2="409.2" y2="866.2" stroke="#1A1A1A" stroke-width="1.3" />
<rect x="405.2" y="851.9" width="7.8" height="3.8" fill="#FFFFFF" stroke="#1A1A1A" stroke-width="1"/>
<line x1="404.2" y1="870" x2="414.2" y2="870" stroke="#1A1A1A" stroke-width="1" />
<line x1="404.2" y1="873" x2="414.2" y2="873" stroke="#1A1A1A" stroke-width="1" />
<line x1="404.2" y1="876" x2="414.2" y2="876" stroke="#1A1A1A" stroke-width="1" />
<line x1="404.2" y1="879" x2="414.2" y2="879" stroke="#1A1A1A" stroke-width="1" />
<line x1="404.2" y1="882" x2="414.2" y2="882" stroke="#1A1A1A" stroke-width="1" />
<line x1="404.2" y1="885" x2="414.2" y2="885" stroke="#1A1A1A" stroke-width="1" />
<line x1="409.2" y1="868" x2="409.2" y2="888" stroke="#1A1A1A" stroke-width="1" />
<line x1="384.2" y1="859.5" x2="401.2" y2="859.5" stroke="#B0A8C0" stroke-width="0.7" />
<line x1="288" y1="866.2" x2="448" y2="866.2" stroke="#1A1A1A" stroke-width="1.3" />
<path d="M445.5 864.7 L448 866.2 L445.5 867.7" stroke="#1A1A1A" stroke-width="0.8" fill="none" />
<line x1="110" y1="935.9" x2="476.8" y2="935.9" stroke="#1A1A1A" stroke-width="1.2" />
<line x1="146.5" y1="935.9" x2="146.5" y2="950.8" stroke="#1A1A1A" stroke-width="1" />
<line x1="157.3" y1="935.9" x2="157.3" y2="950.8" stroke="#1A1A1A" stroke-width="1" />
<line x1="164" y1="935.9" x2="164" y2="950.8" stroke="#1A1A1A" stroke-width="1" />
<line x1="177.9" y1="935.9" x2="177.9" y2="950.8" stroke="#1A1A1A" stroke-width="1" />
<line x1="198.4" y1="935.9" x2="198.4" y2="950.8" stroke="#1A1A1A" stroke-width="1" />
<line x1="271.8" y1="935.9" x2="271.8" y2="950.8" stroke="#1A1A1A" stroke-width="1" />
<line x1="310" y1="935.9" x2="310" y2="950.8" stroke="#1A1A1A" stroke-width="1" />
<line x1="370.8" y1="935.9" x2="370.8" y2="950.8" stroke="#1A1A1A" stroke-width="1" />
<line x1="110" y1="938.2" x2="198.4" y2="938.2" stroke="#1A1A1A" stroke-width="0.9" />
<line x1="110" y1="941.1" x2="198.4" y2="941.1" stroke="#1A1A1A" stroke-width="0.9" />
<line x1="110" y1="944" x2="198.4" y2="944" stroke="#1A1A1A" stroke-width="0.9" />
<line x1="110" y1="947" x2="198.4" y2="947" stroke="#1A1A1A" stroke-width="0.9" />
<line x1="198.4" y1="947" x2="370.8" y2="947" stroke="#1A1A1A" stroke-width="0.8" />
<line x1="370.8" y1="943.2" x2="476.8" y2="943.2" stroke="#1A1A1A" stroke-width="1" />
<line x1="420" y1="935.9" x2="420" y2="943.2" stroke="#1A1A1A" stroke-width="1" />
<line x1="434.8" y1="935.9" x2="434.8" y2="950.8" stroke="#1A1A1A" stroke-width="1" />
<line x1="434.8" y1="939.1" x2="476.8" y2="939.1" stroke="#1A1A1A" stroke-width="0.8" />
<line x1="398" y1="943.2" x2="398" y2="950.8" stroke="#1A1A1A" stroke-width="1" />
<line x1="461.2" y1="943.2" x2="461.2" y2="950.8" stroke="#1A1A1A" stroke-width="1" />
<line x1="461.2" y1="947" x2="476.8" y2="947" stroke="#1A1A1A" stroke-width="0.8" />
<circle cx="278.3" cy="941.7" r="3.3" fill="#E8602A"/>
<circle cx="277.5" cy="942.5" r="2.2" fill="#3A7AD8"/>
<text x="283.6" y="944.8" font-size="6.5" fill="#555" font-weight="normal" text-anchor="start" textLength="23" lengthAdjust="spacingAndGlyphs" >AUCOTEC</text>
<line x1="200" y1="940" x2="230" y2="940" stroke="#B0A8C0" stroke-width="0.8" />
<line x1="200" y1="945" x2="225" y2="945" stroke="#B0A8C0" stroke-width="0.8" />
<line x1="312" y1="942" x2="330" y2="942" stroke="#B0A8C0" stroke-width="0.8" />
<line x1="372" y1="939" x2="395" y2="939" stroke="#B0A8C0" stroke-width="0.8" />
<line x1="422" y1="939" x2="430" y2="939" stroke="#B0A8C0" stroke-width="0.8" />
<rect x="500" y="220" width="778" height="20.5" fill="#EBEBEB" />
<rect x="500" y="240" width="20.5" height="736" fill="#EBEBEB" />
<rect x="521" y="241" width="757" height="735" fill="#FFFFFF" />
<g stroke="#D9D9D9" stroke-width="1.2">
<line x1="532.8" y1="241" x2="532.8" y2="976"/>
<line x1="556.0" y1="241" x2="556.0" y2="976"/>
<line x1="579.2" y1="241" x2="579.2" y2="976"/>
<line x1="602.4" y1="241" x2="602.4" y2="976"/>
<line x1="625.6" y1="241" x2="625.6" y2="976"/>
<line x1="648.8" y1="241" x2="648.8" y2="976"/>
<line x1="672.0" y1="241" x2="672.0" y2="976"/>
<line x1="695.2" y1="241" x2="695.2" y2="976"/>
<line x1="718.4" y1="241" x2="718.4" y2="976"/>
<line x1="741.6" y1="241" x2="741.6" y2="976"/>
<line x1="764.8" y1="241" x2="764.8" y2="976"/>
<line x1="788.0" y1="241" x2="788.0" y2="976"/>
<line x1="811.2" y1="241" x2="811.2" y2="976"/>
<line x1="834.4" y1="241" x2="834.4" y2="976"/>
<line x1="857.6" y1="241" x2="857.6" y2="976"/>
<line x1="880.8" y1="241" x2="880.8" y2="976"/>
<line x1="904.0" y1="241" x2="904.0" y2="976"/>
<line x1="927.2" y1="241" x2="927.2" y2="976"/>
<line x1="950.4" y1="241" x2="950.4" y2="976"/>
<line x1="973.6" y1="241" x2="973.6" y2="976"/>
<line x1="996.8" y1="241" x2="996.8" y2="976"/>
<line x1="1020.0" y1="241" x2="1020.0" y2="976"/>
<line x1="1043.2" y1="241" x2="1043.2" y2="976"/>
<line x1="1066.4" y1="241" x2="1066.4" y2="976"/>
<line x1="1089.6" y1="241" x2="1089.6" y2="976"/>
<line x1="1112.8" y1="241" x2="1112.8" y2="976"/>
<line x1="1136.0" y1="241" x2="1136.0" y2="976"/>
<line x1="1159.2" y1="241" x2="1159.2" y2="976"/>
<line x1="1182.4" y1="241" x2="1182.4" y2="976"/>
<line x1="1205.6" y1="241" x2="1205.6" y2="976"/>
<line x1="1228.8" y1="241" x2="1228.8" y2="976"/>
<line x1="1252.0" y1="241" x2="1252.0" y2="976"/>
<line x1="1275.2" y1="241" x2="1275.2" y2="976"/>
<line x1="521" y1="249.7" x2="1278" y2="249.7"/>
<line x1="521" y1="272.9" x2="1278" y2="272.9"/>
<line x1="521" y1="296.1" x2="1278" y2="296.1"/>
<line x1="521" y1="319.3" x2="1278" y2="319.3"/>
<line x1="521" y1="342.5" x2="1278" y2="342.5"/>
<line x1="521" y1="365.7" x2="1278" y2="365.7"/>
<line x1="521" y1="388.9" x2="1278" y2="388.9"/>
<line x1="521" y1="412.1" x2="1278" y2="412.1"/>
<line x1="521" y1="435.3" x2="1278" y2="435.3"/>
<line x1="521" y1="458.5" x2="1278" y2="458.5"/>
<line x1="521" y1="481.7" x2="1278" y2="481.7"/>
<line x1="521" y1="504.9" x2="1278" y2="504.9"/>
<line x1="521" y1="528.1" x2="1278" y2="528.1"/>
<line x1="521" y1="551.3" x2="1278" y2="551.3"/>
<line x1="521" y1="574.5" x2="1278" y2="574.5"/>
<line x1="521" y1="597.7" x2="1278" y2="597.7"/>
<line x1="521" y1="620.9" x2="1278" y2="620.9"/>
<line x1="521" y1="644.1" x2="1278" y2="644.1"/>
<line x1="521" y1="667.3" x2="1278" y2="667.3"/>
<line x1="521" y1="690.5" x2="1278" y2="690.5"/>
<line x1="521" y1="713.7" x2="1278" y2="713.7"/>
<line x1="521" y1="736.9" x2="1278" y2="736.9"/>
<line x1="521" y1="760.1" x2="1278" y2="760.1"/>
<line x1="521" y1="783.3" x2="1278" y2="783.3"/>
<line x1="521" y1="806.5" x2="1278" y2="806.5"/>
<line x1="521" y1="829.7" x2="1278" y2="829.7"/>
<line x1="521" y1="852.9" x2="1278" y2="852.9"/>
<line x1="521" y1="876.1" x2="1278" y2="876.1"/>
<line x1="521" y1="899.3" x2="1278" y2="899.3"/>
<line x1="521" y1="922.5" x2="1278" y2="922.5"/>
<line x1="521" y1="945.7" x2="1278" y2="945.7"/>
<line x1="521" y1="968.9" x2="1278" y2="968.9"/>
</g>
<line x1="500" y1="240.5" x2="1278" y2="240.5" stroke="#A0A0A0" stroke-width="1" />
<line x1="520.5" y1="220" x2="520.5" y2="976" stroke="#A0A0A0" stroke-width="1" />
<line x1="504" y1="230" x2="519" y2="230" stroke="#C8C8C8" stroke-width="1" />
<line x1="510.5" y1="221" x2="510.5" y2="239" stroke="#C8C8C8" stroke-width="1" />
<g stroke="#A0A0A0" stroke-width="1">
<line x1="544.4" y1="220" x2="544.4" y2="240"/>
<line x1="573.4" y1="226.5" x2="573.4" y2="240"/>
<line x1="602.4" y1="220" x2="602.4" y2="240"/>
<line x1="631.4" y1="226.5" x2="631.4" y2="240"/>
<line x1="660.4" y1="220" x2="660.4" y2="240"/>
<line x1="689.4" y1="226.5" x2="689.4" y2="240"/>
<line x1="718.4" y1="220" x2="718.4" y2="240"/>
<line x1="747.4" y1="226.5" x2="747.4" y2="240"/>
<line x1="776.4" y1="220" x2="776.4" y2="240"/>
<line x1="805.4" y1="226.5" x2="805.4" y2="240"/>
<line x1="834.4" y1="220" x2="834.4" y2="240"/>
<line x1="863.4" y1="226.5" x2="863.4" y2="240"/>
<line x1="892.4" y1="220" x2="892.4" y2="240"/>
<line x1="921.4" y1="226.5" x2="921.4" y2="240"/>
<line x1="950.4" y1="220" x2="950.4" y2="240"/>
<line x1="979.4" y1="226.5" x2="979.4" y2="240"/>
<line x1="1008.4" y1="220" x2="1008.4" y2="240"/>
<line x1="1037.4" y1="226.5" x2="1037.4" y2="240"/>
<line x1="1066.4" y1="220" x2="1066.4" y2="240"/>
<line x1="1095.4" y1="226.5" x2="1095.4" y2="240"/>
<line x1="1124.4" y1="220" x2="1124.4" y2="240"/>
<line x1="1153.4" y1="226.5" x2="1153.4" y2="240"/>
<line x1="1182.4" y1="220" x2="1182.4" y2="240"/>
<line x1="1211.4" y1="226.5" x2="1211.4" y2="240"/>
<line x1="1240.4" y1="220" x2="1240.4" y2="240"/>
<line x1="1269.4" y1="226.5" x2="1269.4" y2="240"/>
<line x1="506" y1="951.5" x2="520" y2="951.5"/>
<line x1="500" y1="922.5" x2="520" y2="922.5"/>
<line x1="506" y1="893.5" x2="520" y2="893.5"/>
<line x1="500" y1="864.5" x2="520" y2="864.5"/>
<line x1="506" y1="835.5" x2="520" y2="835.5"/>
<line x1="500" y1="806.5" x2="520" y2="806.5"/>
<line x1="506" y1="777.5" x2="520" y2="777.5"/>
<line x1="500" y1="748.5" x2="520" y2="748.5"/>
<line x1="506" y1="719.5" x2="520" y2="719.5"/>
<line x1="500" y1="690.5" x2="520" y2="690.5"/>
<line x1="506" y1="661.5" x2="520" y2="661.5"/>
<line x1="500" y1="632.5" x2="520" y2="632.5"/>
<line x1="506" y1="603.5" x2="520" y2="603.5"/>
<line x1="500" y1="574.5" x2="520" y2="574.5"/>
<line x1="506" y1="545.5" x2="520" y2="545.5"/>
<line x1="500" y1="516.5" x2="520" y2="516.5"/>
<line x1="506" y1="487.5" x2="520" y2="487.5"/>
<line x1="500" y1="458.5" x2="520" y2="458.5"/>
<line x1="506" y1="429.5" x2="520" y2="429.5"/>
<line x1="500" y1="400.5" x2="520" y2="400.5"/>
<line x1="506" y1="371.5" x2="520" y2="371.5"/>
<line x1="500" y1="342.5" x2="520" y2="342.5"/>
<line x1="506" y1="313.5" x2="520" y2="313.5"/>
<line x1="500" y1="284.5" x2="520" y2="284.5"/>
<line x1="506" y1="255.5" x2="520" y2="255.5"/>
</g>
<text x="545.9" y="232.3" font-size="12.5" fill="#333333" font-weight="normal" text-anchor="start" textLength="12.5" lengthAdjust="spacingAndGlyphs" >30</text>
<text x="603.9" y="232.3" font-size="12.5" fill="#333333" font-weight="normal" text-anchor="start" textLength="12.5" lengthAdjust="spacingAndGlyphs" >40</text>
<text x="661.9" y="232.3" font-size="12.5" fill="#333333" font-weight="normal" text-anchor="start" textLength="12.5" lengthAdjust="spacingAndGlyphs" >50</text>
<text x="719.9" y="232.3" font-size="12.5" fill="#333333" font-weight="normal" text-anchor="start" textLength="12.5" lengthAdjust="spacingAndGlyphs" >60</text>
<text x="777.9" y="232.3" font-size="12.5" fill="#333333" font-weight="normal" text-anchor="start" textLength="12.5" lengthAdjust="spacingAndGlyphs" >70</text>
<text x="835.9" y="232.3" font-size="12.5" fill="#333333" font-weight="normal" text-anchor="start" textLength="12.5" lengthAdjust="spacingAndGlyphs" >80</text>
<text x="893.9" y="232.3" font-size="12.5" fill="#333333" font-weight="normal" text-anchor="start" textLength="12.5" lengthAdjust="spacingAndGlyphs" >90</text>
<text x="951.9" y="232.3" font-size="12.5" fill="#333333" font-weight="normal" text-anchor="start" textLength="19" lengthAdjust="spacingAndGlyphs" >100</text>
<text x="1009.9" y="232.3" font-size="12.5" fill="#333333" font-weight="normal" text-anchor="start" textLength="19" lengthAdjust="spacingAndGlyphs" >110</text>
<text x="1067.9" y="232.3" font-size="12.5" fill="#333333" font-weight="normal" text-anchor="start" textLength="19" lengthAdjust="spacingAndGlyphs" >120</text>
<text x="1125.9" y="232.3" font-size="12.5" fill="#333333" font-weight="normal" text-anchor="start" textLength="19" lengthAdjust="spacingAndGlyphs" >130</text>
<text x="1183.9" y="232.3" font-size="12.5" fill="#333333" font-weight="normal" text-anchor="start" textLength="19" lengthAdjust="spacingAndGlyphs" >140</text>
<text x="1241.9" y="232.3" font-size="12.5" fill="#333333" font-weight="normal" text-anchor="start" textLength="19" lengthAdjust="spacingAndGlyphs" >150</text>
<text transform="translate(513.3,937.3) rotate(-90)" font-size="12.5" fill="#333333" textLength="12.5" lengthAdjust="spacingAndGlyphs">40</text>
<text transform="translate(513.3,879.3) rotate(-90)" font-size="12.5" fill="#333333" textLength="12.5" lengthAdjust="spacingAndGlyphs">50</text>
<text transform="translate(513.3,821.3) rotate(-90)" font-size="12.5" fill="#333333" textLength="12.5" lengthAdjust="spacingAndGlyphs">60</text>
<text transform="translate(513.3,763.3) rotate(-90)" font-size="12.5" fill="#333333" textLength="12.5" lengthAdjust="spacingAndGlyphs">70</text>
<text transform="translate(513.3,705.3) rotate(-90)" font-size="12.5" fill="#333333" textLength="12.5" lengthAdjust="spacingAndGlyphs">80</text>
<text transform="translate(513.3,647.3) rotate(-90)" font-size="12.5" fill="#333333" textLength="12.5" lengthAdjust="spacingAndGlyphs">90</text>
<text transform="translate(513.3,595.8) rotate(-90)" font-size="12.5" fill="#333333" textLength="19" lengthAdjust="spacingAndGlyphs">100</text>
<text transform="translate(513.3,537.8) rotate(-90)" font-size="12.5" fill="#333333" textLength="19" lengthAdjust="spacingAndGlyphs">110</text>
<text transform="translate(513.3,479.8) rotate(-90)" font-size="12.5" fill="#333333" textLength="19" lengthAdjust="spacingAndGlyphs">120</text>
<text transform="translate(513.3,421.8) rotate(-90)" font-size="12.5" fill="#333333" textLength="19" lengthAdjust="spacingAndGlyphs">130</text>
<text transform="translate(513.3,363.8) rotate(-90)" font-size="12.5" fill="#333333" textLength="19" lengthAdjust="spacingAndGlyphs">140</text>
<text transform="translate(513.3,305.8) rotate(-90)" font-size="12.5" fill="#333333" textLength="19" lengthAdjust="spacingAndGlyphs">150</text>
<clipPath id="vr"><rect x="500" y="241" width="20" height="30"/></clipPath>
<g clip-path="url(#vr)"><text transform="translate(513.3,247.0) rotate(-90)" font-size="12.5" fill="#333333" textLength="19" lengthAdjust="spacingAndGlyphs">160</text></g>
<rect x="1278" y="220" width="20" height="756" fill="#F0F0F0" />
<rect x="1298" y="206" width="3" height="791" fill="#E6E6E6" />
<rect x="1279.5" y="222.5" width="18" height="18" fill="#FFFFFF" stroke="#A0A0A0" stroke-width="1"/>
<path d="M1283.5 235 H1293.5 L1288.5 229.5 Z" stroke="none" stroke-width="1" fill="#000" />
<rect x="1279.5" y="585.5" width="18" height="127" fill="#FFFFFF" stroke="#8A8A8A" stroke-width="1"/>
<rect x="1279.5" y="956.5" width="18" height="17.5" fill="#FFFFFF" stroke="#A0A0A0" stroke-width="1"/>
<path d="M1283.5 962.5 H1293.5 L1288.5 968 Z" stroke="none" stroke-width="1" fill="#000" />
<rect x="500" y="976" width="778" height="21" fill="#F0F0F0" />
<rect x="502.5" y="977.5" width="18" height="18" fill="#FFFFFF" stroke="#A0A0A0" stroke-width="1"/>
<path d="M514.5 981.5 V991.5 L509 986.5 Z" stroke="none" stroke-width="1" fill="#000" />
<rect x="775.5" y="977.5" width="82" height="18" fill="#FFFFFF" stroke="#8A8A8A" stroke-width="1"/>
<rect x="1257.5" y="977.5" width="18" height="18" fill="#FFFFFF" stroke="#A0A0A0" stroke-width="1"/>
<path d="M1263.5 981.5 V991.5 L1269 986.5 Z" stroke="none" stroke-width="1" fill="#000" />
<clipPath id="cv"><rect x="521" y="241" width="757" height="735"/></clipPath>
<g clip-path="url(#cv)" stroke-linecap="butt">
<line x1="787.8" y1="238" x2="787.8" y2="521.6" stroke="#000000" stroke-width="2.0" />
<line x1="834.2" y1="238" x2="834.2" y2="521.6" stroke="#000000" stroke-width="2.0" />
<line x1="880.5" y1="238" x2="880.5" y2="521.6" stroke="#000000" stroke-width="2.0" />
<line x1="787.8" y1="533.8000000000001" x2="787.8" y2="783" stroke="#000000" stroke-width="2.0" />
<path d="M787.8 783 L804.1 798.7" stroke="#000000" stroke-width="2.0" fill="none" />
<line x1="834.2" y1="533.8000000000001" x2="834.2" y2="783.1999999999999" stroke="#000000" stroke-width="2.0" />
<line x1="880.5" y1="533.8000000000001" x2="880.5" y2="783" stroke="#000000" stroke-width="2.0" />
<path d="M880.5 783 L864 798.7" stroke="#000000" stroke-width="2.0" fill="none" />
<path d="M834.2 238 L845.5 249.5 H1066.4 V238" stroke="#000000" stroke-width="2.0" fill="none" />
<path d="M787.8 284 L799.5 295.7 H1112.8 V238" stroke="#000000" stroke-width="2.0" fill="none" />
<text x="642.5" y="439.2" font-size="14.4" fill="#000000" font-weight="normal" text-anchor="end" >/4.8A</text>
<path d="M648.4 428.5 L659.5 434.8 L648.4 441.1" stroke="#000000" stroke-width="2.0" fill="none" />
<line x1="659.5" y1="434.8" x2="709.8" y2="434.8" stroke="#000000" stroke-width="2.0" />
<text x="671.5" y="431" font-size="14.4" fill="#000000" font-weight="normal" text-anchor="start" >PE</text>
<line x1="694.3" y1="434.8" x2="709.8" y2="434.8" stroke="#000000" stroke-width="1.9" />
<line x1="718.4" y1="434.8" x2="719.9999999999999" y2="434.8" stroke="#000000" stroke-width="1.9" />
<line x1="728.8" y1="434.8" x2="744.3" y2="434.8" stroke="#000000" stroke-width="1.9" />
<line x1="752.9" y1="434.8" x2="754.4999999999999" y2="434.8" stroke="#000000" stroke-width="1.9" />
<line x1="763.3" y1="434.8" x2="778.8" y2="434.8" stroke="#000000" stroke-width="1.9" />
<line x1="787.4" y1="434.8" x2="788.9999999999999" y2="434.8" stroke="#000000" stroke-width="1.9" />
<line x1="797.8" y1="434.8" x2="813.3" y2="434.8" stroke="#000000" stroke-width="1.9" />
<line x1="821.9" y1="434.8" x2="823.4999999999999" y2="434.8" stroke="#000000" stroke-width="1.9" />
<line x1="832.3" y1="434.8" x2="847.8" y2="434.8" stroke="#000000" stroke-width="1.9" />
<line x1="856.4" y1="434.8" x2="857.9999999999999" y2="434.8" stroke="#000000" stroke-width="1.9" />
<line x1="866.8" y1="434.8" x2="882.3" y2="434.8" stroke="#000000" stroke-width="1.9" />
<line x1="890.9" y1="434.8" x2="892.4999999999999" y2="434.8" stroke="#000000" stroke-width="1.9" />
<line x1="901.3" y1="434.8" x2="916.8" y2="434.8" stroke="#000000" stroke-width="1.9" />
<line x1="926.6" y1="434.8" x2="942.0" y2="434.8" stroke="#000000" stroke-width="1.9" />
<line x1="949.9000000000001" y1="434.8" x2="951.5" y2="434.8" stroke="#000000" stroke-width="1.9" />
<line x1="961.0" y1="434.8" x2="976.4" y2="434.8" stroke="#000000" stroke-width="1.9" />
<line x1="984.3000000000001" y1="434.8" x2="985.9" y2="434.8" stroke="#000000" stroke-width="1.9" />
<line x1="995.4" y1="434.8" x2="1010.8" y2="434.8" stroke="#000000" stroke-width="1.9" />
<line x1="1018.7" y1="434.8" x2="1020.3" y2="434.8" stroke="#000000" stroke-width="1.9" />
<line x1="1029.8" y1="434.8" x2="1045.2" y2="434.8" stroke="#000000" stroke-width="1.9" />
<line x1="1053.1" y1="434.8" x2="1054.6999999999998" y2="434.8" stroke="#000000" stroke-width="1.9" />
<line x1="1064.2" y1="434.8" x2="1079.6000000000001" y2="434.8" stroke="#000000" stroke-width="1.9" />
<line x1="1087.5" y1="434.8" x2="1089.1" y2="434.8" stroke="#000000" stroke-width="1.9" />
<line x1="1098.6" y1="434.8" x2="1114.0" y2="434.8" stroke="#000000" stroke-width="1.9" />
<line x1="1121.8999999999999" y1="434.8" x2="1123.4999999999998" y2="434.8" stroke="#000000" stroke-width="1.9" />
<line x1="1133.4" y1="434.8" x2="1182.5" y2="434.8" stroke="#000000" stroke-width="2.0" />
<path d="M1171.4 428.3 L1182.9 434.8 L1171.4 441.3" stroke="#000000" stroke-width="2.0" fill="none" />
<text x="1139.7" y="431" font-size="14.4" fill="#000000" font-weight="normal" text-anchor="start" >PE</text>
<text x="1188" y="439.2" font-size="14.4" fill="#000000" font-weight="normal" text-anchor="start" >/6.2A</text>
<circle cx="926.8" cy="434.8" r="6.6" fill="#000000"/>
<line x1="926.8" y1="435" x2="926.8" y2="453.5" stroke="#000000" stroke-width="1.9" />
<line x1="926.8" y1="472.9" x2="926.8" y2="487.7" stroke="#000000" stroke-width="1.9" />
<line x1="926.8" y1="506.8" x2="926.8" y2="521.6" stroke="#000000" stroke-width="1.9" />
<line x1="926.8" y1="533.8000000000001" x2="926.8" y2="540.4" stroke="#000000" stroke-width="1.9" />
<line x1="926.8" y1="556.9" x2="926.8" y2="573.8" stroke="#000000" stroke-width="1.9" />
<line x1="926.8" y1="595" x2="926.8" y2="609.6" stroke="#000000" stroke-width="1.9" />
<line x1="926.8" y1="628.7" x2="926.8" y2="651" stroke="#000000" stroke-width="1.9" />
<line x1="926.8" y1="673.6" x2="926.8" y2="690.4" stroke="#000000" stroke-width="1.9" />
<line x1="926.8" y1="709.5" x2="926.8" y2="725.2" stroke="#000000" stroke-width="1.9" />
<line x1="926.8" y1="462.2" x2="926.8" y2="463.8" stroke="#000000" stroke-width="1.9" />
<line x1="926.8" y1="496.5" x2="926.8" y2="498.1" stroke="#000000" stroke-width="1.9" />
<line x1="926.8" y1="549.4000000000001" x2="926.8" y2="551.0" stroke="#000000" stroke-width="1.9" />
<line x1="926.8" y1="583.7" x2="926.8" y2="585.3" stroke="#000000" stroke-width="1.9" />
<line x1="926.8" y1="618.9000000000001" x2="926.8" y2="620.5" stroke="#000000" stroke-width="1.9" />
<line x1="926.8" y1="664.9000000000001" x2="926.8" y2="666.5" stroke="#000000" stroke-width="1.9" />
<line x1="926.8" y1="699.7" x2="926.8" y2="701.3" stroke="#000000" stroke-width="1.9" />
<line x1="926.8" y1="733.8000000000001" x2="926.8" y2="735.4" stroke="#000000" stroke-width="1.9" />
<line x1="926.8" y1="744.3" x2="926.8" y2="783" stroke="#000000" stroke-width="2.0" />
<path d="M926.8 783 L891.7 817.6 H868.4" stroke="#000000" stroke-width="2.0" fill="none" />
<circle cx="787.8" cy="527.7" r="6.1" fill="none" stroke="#000000" stroke-width="1.9"/>
<circle cx="834.2" cy="527.7" r="6.1" fill="none" stroke="#000000" stroke-width="1.9"/>
<circle cx="880.5" cy="527.7" r="6.1" fill="none" stroke="#000000" stroke-width="1.9"/>
<circle cx="926.8" cy="527.7" r="6.1" fill="none" stroke="#000000" stroke-width="1.9"/>
<text transform="translate(783.3,521.4) rotate(-90)" font-size="14.4" fill="#000000">1</text>
<text transform="translate(830.2,521.4) rotate(-90)" font-size="14.4" fill="#000000">2</text>
<text transform="translate(876.4,521.4) rotate(-90)" font-size="14.4" fill="#000000">3</text>
<text transform="translate(922.3,521.4) rotate(-90)" font-size="14.4" fill="#000000">4</text>
<text x="767.6" y="522.7" font-size="19.5" fill="#000000" font-weight="normal" text-anchor="end" >-1X1</text>
<line x1="741.8" y1="644.0" x2="950.8" y2="644.0" stroke="#000000" stroke-width="2.0" />
<line x1="741.8" y1="632.2" x2="741.8" y2="655.5" stroke="#000000" stroke-width="2.0" />
<line x1="781.3" y1="649.8" x2="794.3" y2="637.4" stroke="#000000" stroke-width="2.0" />
<line x1="827.7" y1="649.8" x2="840.7" y2="637.4" stroke="#000000" stroke-width="2.0" />
<line x1="874.0" y1="649.8" x2="887.0" y2="637.4" stroke="#000000" stroke-width="2.0" />
<line x1="920.3" y1="649.8" x2="933.3" y2="637.4" stroke="#000000" stroke-width="2.0" />
<text transform="translate(783.3,640.4) rotate(-90)" font-size="14.4" fill="#000000">1</text>
<text transform="translate(829.6,640.4) rotate(-90)" font-size="14.4" fill="#000000">2</text>
<text transform="translate(876,640.4) rotate(-90)" font-size="14.4" fill="#000000">3</text>
<text transform="translate(922.8,640.4) rotate(-90)" font-size="14.4" fill="#000000">4</text>
<text x="734.9" y="648.4" font-size="19.5" fill="#000000" font-weight="normal" text-anchor="end" >-W3</text>
<text x="734.9" y="667.3" font-size="14.4" fill="#000000" font-weight="normal" text-anchor="end" >Antrieb</text>
<text x="734.9" y="685.6" font-size="14.4" fill="#000000" font-weight="normal" text-anchor="end" >drive</text>
<text x="734.9" y="702.8" font-size="14.4" fill="#000000" font-weight="normal" text-anchor="end" >Unidad</text>
<circle cx="834.2" cy="817.4" r="34.2" fill="none" stroke="#000000" stroke-width="2.0"/>
<text x="833.9" y="815.8" font-size="14" fill="#000000" font-weight="normal" text-anchor="middle" >M</text>
<text x="833.4" y="830.8" font-size="14" fill="#000000" font-weight="normal" text-anchor="middle" >3AC</text>
<text transform="translate(784,778.4) rotate(-90)" font-size="14.4" fill="#000000">U</text>
<text transform="translate(830.6,778.9) rotate(-90)" font-size="14.4" fill="#000000">V</text>
<text transform="translate(876.7,778.9) rotate(-90)" font-size="14.4" fill="#000000">W</text>
<text transform="translate(922.9,778.4) rotate(-90)" font-size="14.4" fill="#000000">PE</text>
<text x="767.2" y="780.3" font-size="19.5" fill="#000000" font-weight="normal" text-anchor="end" >+EX1</text>
<text x="767.2" y="800.3" font-size="19.5" fill="#000000" font-weight="normal" text-anchor="end" >-M5.1</text>
<text x="768.4" y="835.6" font-size="14.4" fill="#000000" font-weight="normal" text-anchor="end" >Bandantrieb</text>
<text x="768.4" y="850.4" font-size="14.4" fill="#000000" font-weight="normal" text-anchor="end" >Conveyor drive</text>
<text x="768.4" y="864.2" font-size="14.4" fill="#000000" font-weight="normal" text-anchor="end" >Transportador</text>
<text x="768.4" y="878.7" font-size="14.4" fill="#000000" font-weight="normal" text-anchor="end" >400V</text>
<text x="768.4" y="893.2" font-size="14.4" fill="#000000" font-weight="normal" text-anchor="end" >1,5kW</text>
<text x="768.4" y="908.2" font-size="14.4" fill="#000000" font-weight="normal" text-anchor="end" >3000 U/min</text>
</g>
<text x="105.8" y="1015.9" font-size="13.5" fill="#444444" font-weight="normal" text-anchor="start" textLength="104" lengthAdjust="spacingAndGlyphs" >Zeichenbl. 1 von 1</text>
<text x="235" y="1015.9" font-size="13.5" fill="#444444" font-weight="normal" text-anchor="start" textLength="128.6" lengthAdjust="spacingAndGlyphs" >Deutsch (Deutschland)</text>
<path d="M389.5 1004 H405.5 V1008" stroke="#555" stroke-width="1.2" fill="none" />
<line x1="389.5" y1="1006.5" x2="405.5" y2="1006.5" stroke="#555" stroke-width="1" />
<path d="M389.5 1004 V1019 H396" stroke="#555" stroke-width="1.2" fill="none" />
<line x1="391.5" y1="1010" x2="394.5" y2="1010" stroke="#555" stroke-width="1" />
<line x1="391.5" y1="1013" x2="394.5" y2="1013" stroke="#555" stroke-width="1" />
<line x1="391.5" y1="1016" x2="394.5" y2="1016" stroke="#555" stroke-width="1" />
<circle cx="400.5" cy="1013.5" r="5.2" fill="#F3F2F1" stroke="#444" stroke-width="1.3"/>
<circle cx="400.5" cy="1013.5" r="2.5" fill="#444"/>
<path d="M961.5 1002 H978.5 M962.5 1002 V1011.5 H977.5 V1002" stroke="#555" stroke-width="1.3" fill="none" />
<line x1="970" y1="1011.5" x2="970" y2="1019" stroke="#555" stroke-width="1.3" />
<line x1="964.5" y1="1019.5" x2="975.5" y2="1019.5" stroke="#555" stroke-width="1.3" />
<line x1="1002" y1="1010.5" x2="1012" y2="1010.5" stroke="#555" stroke-width="1.2" />
<line x1="1018.2" y1="1011" x2="1142.5" y2="1011" stroke="#333" stroke-width="1.2" />
<line x1="1081.5" y1="1006.5" x2="1081.5" y2="1015.5" stroke="#555" stroke-width="1" />
<rect x="1083" y="1004" width="6.3" height="13.7" fill="#444" />
<line x1="1148.6" y1="1010.5" x2="1158.6" y2="1010.5" stroke="#555" stroke-width="1.2" />
<line x1="1153.6" y1="1005.5" x2="1153.6" y2="1015.5" stroke="#555" stroke-width="1.2" />
<text x="1174.5" y="1015.8" font-size="13.5" fill="#444444" font-weight="normal" text-anchor="start" textLength="34.5" lengthAdjust="spacingAndGlyphs" xml:space="preserve">123 %</text>
<rect x="1230.5" y="1006.5" width="10" height="8.5" fill="none" stroke="#555" stroke-width="1.2"/>
<path d="M1229 1008 L1226.5 1010.75 L1229 1013.5 M1242.5 1008 L1245 1010.75 L1242.5 1013.5 M1233 1004.5 L1235.5 1002 L1238 1004.5 M1233 1017 L1235.5 1019.5 L1238 1017" stroke="#555" stroke-width="1.1" fill="none" />
<path d="M1261.5 1003.5 H1276.5 M1261.5 1006.5 H1276.5 V1016.5 H1270" stroke="#555" stroke-width="1.2" fill="none" />
<path d="M1261.5 1006.5 V1016.5 H1264 M1264 1013 C 1264 1010 1266 1009.5 1270 1009.5 H1274 M1268 1016 L1265.5 1018.5 L1268 1021 M1265.5 1018.5 H1272" stroke="#555" stroke-width="1.2" fill="none" />
<defs><filter id="blur1" filterUnits="userSpaceOnUse" x="0" y="0" width="300" height="1025"><feGaussianBlur stdDeviation="2"/></filter></defs>
<rect x="88" y="421" width="16" height="19" fill="#FFFFFF" rx="3"/>
<rect x="90" y="447" width="14" height="29" fill="#FFFFFF" rx="3"/>
<rect x="92" y="645" width="12" height="16" fill="#FFFFFF" rx="2"/>
<rect x="97" y="758" width="4" height="20" fill="#FFFFFF" />
<text x="73.8" y="435.2" font-size="15.5" fill="#474747" font-weight="normal" text-anchor="middle" textLength="87.5" lengthAdjust="spacingAndGlyphs" >Engineering-</text>
<text x="73.8" y="453" font-size="15.5" fill="#474747" font-weight="normal" text-anchor="middle" textLength="40.5" lengthAdjust="spacingAndGlyphs" >Base-</text>
<text x="73.8" y="470.5" font-size="15.5" fill="#474747" font-weight="normal" text-anchor="middle" textLength="57.5" lengthAdjust="spacingAndGlyphs" >Explorer</text>
<text x="60.7" y="638.4" font-size="15.5" fill="#474747" font-weight="normal" text-anchor="middle" textLength="45.4" lengthAdjust="spacingAndGlyphs" >Listen-</text>
<text x="60.7" y="656.2" font-size="15.5" fill="#474747" font-weight="normal" text-anchor="middle" textLength="90.6" lengthAdjust="spacingAndGlyphs" >Schaltflächen</text>
<text x="65.5" y="769" font-size="15.5" fill="#474747" font-weight="normal" text-anchor="middle" textLength="68.9" lengthAdjust="spacingAndGlyphs" >Vorschau-</text>
<text x="65.5" y="786.8" font-size="15.5" fill="#474747" font-weight="normal" text-anchor="middle" textLength="53" lengthAdjust="spacingAndGlyphs" >Bereich</text>
<rect x="106" y="473.8" width="32.5" height="4" fill="#000" opacity="0.45" filter="url(#blur1)"/>
<line x1="104" y1="470.8" x2="136.5" y2="470.8" stroke="#000" stroke-width="4" stroke-linecap="round"/>
<path d="M70 475.5 H97 V482.5 H73 Z" stroke="none" stroke-width="1" fill="#000" />
<rect x="99" y="669" width="40" height="4" fill="#000" opacity="0.45" filter="url(#blur1)"/>
<line x1="97" y1="666" x2="137" y2="666" stroke="#000" stroke-width="4" stroke-linecap="round"/>
<path d="M97 661.7 V677.7 C 86 677.7 82 673 82 669.7 C 82 666 86 661.7 97 661.7 Z" stroke="none" stroke-width="1" fill="#000" />
<rect x="99" y="804" width="49" height="4" fill="#000" opacity="0.45" filter="url(#blur1)"/>
<line x1="97" y1="801" x2="146" y2="801" stroke="#000" stroke-width="4" stroke-linecap="round"/>
<path d="M97 797.3 V812.7 C 91 812.7 88.3 808 88.3 805 C 88.3 801 91 797.3 97 797.3 Z" stroke="none" stroke-width="1" fill="#000" />
</svg>
</body></html>
